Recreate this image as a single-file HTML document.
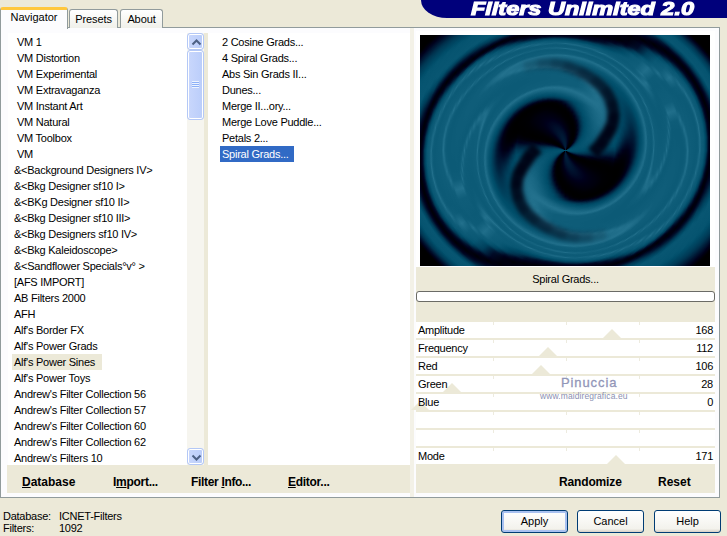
<!DOCTYPE html>
<html><head><meta charset="utf-8"><title>Filters Unlimited 2.0</title>
<style>
*{box-sizing:border-box;margin:0;padding:0}
html,body{width:727px;height:536px;overflow:hidden;background:#ece9d8}
body{position:relative;font-family:"Liberation Sans",sans-serif;font-size:11px;color:#000}
.abs{position:absolute}
#panel{left:0;top:27px;width:720px;height:471px;background:#fcfcfe;border:1px solid #919b9c;border-top-color:#919b9c}
.tab{top:9px;height:19px;border:1px solid #919b9c;border-bottom:none;border-radius:3px 3px 0 0;background:linear-gradient(#fff,#f0f0ea);font-size:11px;text-align:center;line-height:18px;letter-spacing:-0.1px}
#tabnav{left:0;top:7px;width:68px;height:22px;background:#fcfcfe;border:1px solid #919b9c;border-bottom:none;border-top:3px solid #ffc73c;border-radius:3px 3px 0 0;line-height:14px;font-size:11px;text-align:center}
.list{background:#fff;top:33px;height:432px}
.it{position:absolute;height:16px;line-height:16px;white-space:pre;font-size:11px;letter-spacing:-0.25px}
.st{font-size:11px;line-height:13px;letter-spacing:-0.25px;white-space:pre}
.bold{font-weight:bold;font-size:12px}
#banner{left:421px;top:0;width:306px;height:18px;background:#00007b;border-bottom-left-radius:26px 18px}
#title{left:471px;top:-2px;height:22px;color:#fff;font:italic bold 19px/22px "Liberation Sans",sans-serif;white-space:pre;-webkit-text-stroke:1.1px #fff;transform-origin:0 0;transform:scaleX(1.235)}
#prev{left:420px;top:35px;width:290px;height:231px;background:#000;overflow:hidden}
#prev i{position:absolute;left:145px;top:115.5px;border-radius:50%;display:block}
.row{left:416px;width:299px;height:16px;background:linear-gradient(#edebdf,#edebdf) 77px 0/1px 3px no-repeat,linear-gradient(#edebdf,#edebdf) 150px 0/1px 3px no-repeat,linear-gradient(#edebdf,#edebdf) 223px 0/1px 3px no-repeat,#fff}
.row span{position:absolute;top:0;line-height:16px;font-size:11px;letter-spacing:-0.25px}
.row .l{left:2px}.row .v{right:2px}
.tri{position:absolute;width:0;height:0;border-left:9px solid transparent;border-right:9px solid transparent;border-bottom:9px solid #ece9d8;bottom:0}
.btn{top:510px;width:67px;height:23px;border:1px solid #003c74;border-radius:3px;background:linear-gradient(#fff,#f3f2ec 85%,#d6d0c5);text-align:center;line-height:21px;font-size:11px}
.sb{width:17px;height:17px;border:1px solid #b4c8f6;border-radius:3px;background:linear-gradient(90deg,#c9d7fc,#bacdfa);box-shadow:inset 0 0 0 1px #fff}
</style></head><body>
<div class="abs" id="panel"></div>
<div class="abs tab" style="left:69px;width:49px">Presets</div>
<div class="abs tab" style="left:120px;width:43px">About</div>
<div class="abs" id="tabnav">Navigator</div>
<div class="abs" id="banner"></div>
<div class="abs" id="title">Filters Unlimited 2.0</div>

<div class="abs list" id="l1" style="left:8px;width:196px">
<div class="it" style="left:9px;top:1px">VM 1</div>
<div class="it" style="left:9px;top:17px">VM Distortion</div>
<div class="it" style="left:9px;top:33px">VM Experimental</div>
<div class="it" style="left:9px;top:49px">VM Extravaganza</div>
<div class="it" style="left:9px;top:65px">VM Instant Art</div>
<div class="it" style="left:9px;top:81px">VM Natural</div>
<div class="it" style="left:9px;top:97px">VM Toolbox</div>
<div class="it" style="left:9px;top:113px">VM</div>
<div class="it" style="left:6px;top:129px">&amp;&lt;Background Designers IV&gt;</div>
<div class="it" style="left:6px;top:145px">&amp;&lt;Bkg Designer sf10 I&gt;</div>
<div class="it" style="left:6px;top:161px">&amp;&lt;BKg Designer sf10 II&gt;</div>
<div class="it" style="left:6px;top:177px">&amp;&lt;Bkg Designer sf10 III&gt;</div>
<div class="it" style="left:6px;top:193px">&amp;&lt;Bkg Designers sf10 IV&gt;</div>
<div class="it" style="left:6px;top:209px">&amp;&lt;Bkg Kaleidoscope&gt;</div>
<div class="it" style="left:6px;top:225px">&amp;&lt;Sandflower Specials°v° &gt;</div>
<div class="it" style="left:6px;top:241px">[AFS IMPORT]</div>
<div class="it" style="left:6px;top:257px">AB Filters 2000</div>
<div class="it" style="left:6px;top:273px">AFH</div>
<div class="it" style="left:6px;top:289px">Alf&#x27;s Border FX</div>
<div class="it" style="left:6px;top:305px">Alf&#x27;s Power Grads</div>
<div class="abs" style="left:4px;top:321px;width:90px;height:16px;background:#ece9d8"></div>
<div class="it" style="left:6px;top:321px">Alf&#x27;s Power Sines</div>
<div class="it" style="left:6px;top:337px">Alf&#x27;s Power Toys</div>
<div class="it" style="left:6px;top:353px">Andrew&#x27;s Filter Collection 56</div>
<div class="it" style="left:6px;top:369px">Andrew&#x27;s Filter Collection 57</div>
<div class="it" style="left:6px;top:385px">Andrew&#x27;s Filter Collection 60</div>
<div class="it" style="left:6px;top:401px">Andrew&#x27;s Filter Collection 62</div>
<div class="it" style="left:6px;top:417px">Andrew&#x27;s Filters 10</div>
<div class="abs" style="left:179px;top:0;width:17px;height:432px;background:#f6f5ef"></div>
<div class="abs sb" style="left:179px;top:0"><svg width="17" height="17" viewBox="0 0 17 17"><path d="M4.5 10.5L8.5 6.5L12.5 10.5" fill="none" stroke="#4d6185" stroke-width="2"/></svg></div>
<div class="abs sb" style="left:179px;top:17px;height:70px"></div>
<div class="abs" style="left:184px;top:48px;width:7px;height:7px;background:repeating-linear-gradient(#eef4fe 0 1px,#8cb0f8 1px 2px)"></div>
<div class="abs sb" style="left:179px;top:415px"><svg width="17" height="17" viewBox="0 0 17 17"><path d="M4.5 6.5L8.5 10.5L12.5 6.5" fill="none" stroke="#4d6185" stroke-width="2"/></svg></div>
</div>
<div class="abs" style="left:204px;top:33px;width:4px;height:432px;background:#ece9d8"></div>
<div class="abs list" id="l2" style="left:208px;width:202px">
<div class="it" style="left:14px;top:1px">2 Cosine Grads...</div>
<div class="it" style="left:14px;top:17px">4 Spiral Grads...</div>
<div class="it" style="left:14px;top:33px">Abs Sin Grads II...</div>
<div class="it" style="left:14px;top:49px">Dunes...</div>
<div class="it" style="left:14px;top:65px">Merge II...ory...</div>
<div class="it" style="left:14px;top:81px">Merge Love Puddle...</div>
<div class="it" style="left:14px;top:97px">Petals 2...</div>
<div class="abs" style="left:12px;top:113px;width:74px;height:16px;background:#316ac5"></div>
<div class="it" style="left:14px;top:113px;color:#fff">Spiral Grads...</div>
</div>
<div class="abs" style="left:410px;top:28px;width:4px;height:469px;background:#f3f1e7"></div>

<!-- bottom button row -->
<div class="abs" style="left:7px;top:465px;width:403px;height:28px;background:#ece9d8"></div>
<div class="abs bold" style="left:22px;top:475px"><u>D</u>atabase</div>
<div class="abs bold" style="left:113px;top:475px;letter-spacing:-0.27px">I<u>m</u>port...</div>
<div class="abs bold" style="left:191px;top:475px;letter-spacing:-0.33px">Filter <u>I</u>nfo...</div>
<div class="abs bold" style="left:288px;top:475px;letter-spacing:-0.28px"><u>E</u>ditor...</div>

<!-- preview -->
<div class="abs" style="left:416px;top:31px;width:299px;height:236px;background:#fff"></div>
<div class="abs" id="prev">
<i style="width:373px;height:373px;margin:-186.5px;background:#000000"></i>
<i style="width:371px;height:371px;margin:-185.5px;background:#000000"></i>
<i style="width:369px;height:369px;margin:-184.5px;background:#000000"></i>
<i style="width:367px;height:367px;margin:-183.5px;background:#000000"></i>
<i style="width:365px;height:365px;margin:-182.5px;background:#000000"></i>
<i style="width:363px;height:363px;margin:-181.5px;background:#000000"></i>
<i style="width:361px;height:361px;margin:-180.5px;background:repeating-conic-gradient(from 90deg,#000003 0,#000005,#000003,#000000,#000000,#000000,#000000,#000000,#000000,#000000,#000000,#000000,#000000,#000000,#000000,#000000,#000000,#000000,#000000,#000000,#000000,#000000,#000000,#000000,#000000,#000000,#000000,#000000,#000000,#000000,#000000,#000000,#000000,#000000,#000000,#000000,#000003 180deg)"></i>
<i style="width:359px;height:359px;margin:-179.5px;background:repeating-conic-gradient(from 90deg,#00000d 0,#00000e,#00000d,#000009,#000001,#000000,#000000,#000000,#000000,#000000,#000000,#000000,#000000,#000000,#000000,#000000,#000000,#000000,#000000,#000000,#000000,#000000,#000000,#000000,#000000,#000000,#000000,#000000,#000000,#000000,#000000,#000000,#000000,#000000,#000001,#000009,#00000d 180deg)"></i>
<i style="width:357px;height:357px;margin:-178.5px;background:repeating-conic-gradient(from 90deg,#000017 0,#000018,#000017,#000012,#00000b,#000001,#000000,#000000,#000000,#000000,#000000,#000000,#000000,#000000,#000000,#000000,#000000,#000000,#000000,#000000,#000000,#000000,#000000,#000000,#000000,#000000,#000000,#000000,#000000,#000000,#000000,#000000,#000000,#000001,#00000b,#000012,#000017 180deg)"></i>
<i style="width:355px;height:355px;margin:-177.5px;background:repeating-conic-gradient(from 90deg,#000420 0,#000622,#000420,#00001c,#000015,#00000b,#000000,#000000,#000000,#000000,#000000,#000000,#000000,#000000,#000000,#000000,#000000,#000000,#000000,#000000,#000000,#000000,#000000,#000000,#000000,#000000,#000000,#000000,#000000,#000000,#000000,#000000,#000000,#00000b,#000015,#00001c,#000420 180deg)"></i>
<i style="width:353px;height:353px;margin:-176.5px;background:repeating-conic-gradient(from 90deg,#000e2a 0,#000f2b,#000e2a,#000925,#00021e,#000015,#000009,#000000,#000000,#000000,#000000,#000000,#000000,#000000,#000000,#000000,#000000,#000000,#000000,#000000,#000000,#000000,#000000,#000000,#000000,#000000,#000000,#000000,#000000,#000000,#000000,#000000,#000009,#000015,#00021e,#000925,#000e2a 180deg)"></i>
<i style="width:351px;height:351px;margin:-175.5px;background:repeating-conic-gradient(from 90deg,#001733 0,#001935,#001733,#00132f,#000c28,#00021e,#000012,#000004,#000000,#000000,#000000,#000000,#000000,#000000,#000000,#000000,#000000,#000000,#000000,#000000,#000000,#000000,#000000,#000000,#000000,#000000,#000000,#000000,#000000,#000000,#000000,#000004,#000012,#00021e,#000c28,#00132f,#001733 180deg)"></i>
<i style="width:349px;height:349px;margin:-174.5px;background:repeating-conic-gradient(from 90deg,#00213d 0,#00223e,#00213d,#001c38,#001531,#000c28,#00001c,#00000e,#000000,#000000,#000000,#000000,#000000,#000000,#000000,#000000,#000000,#000000,#000000,#000000,#000000,#000000,#000000,#000000,#000000,#000000,#000000,#000000,#000000,#000000,#000000,#00000e,#00001c,#000c28,#001531,#001c38,#00213d 180deg)"></i>
<i style="width:347px;height:347px;margin:-173.5px;background:repeating-conic-gradient(from 90deg,#002a46 0,#002b47,#002945,#002541,#001d39,#00132f,#000723,#000015,#000006,#000000,#000000,#000000,#000000,#000000,#000000,#000000,#000000,#000000,#000000,#000000,#000000,#000000,#000000,#000000,#000000,#000000,#000000,#000000,#000000,#000000,#00000a,#000019,#000b27,#001632,#00203c,#002642,#002a46 180deg)"></i>
<i style="width:345px;height:345px;margin:-172.5px;background:repeating-conic-gradient(from 90deg,#003450 0,#003450,#00324e,#002d49,#002541,#001b37,#000f2b,#00001c,#00000d,#000000,#000000,#000000,#000000,#000000,#000000,#000000,#000000,#000000,#000000,#000000,#000000,#000000,#000000,#000000,#000000,#000000,#000000,#000000,#000000,#000005,#000016,#000925,#001632,#00213d,#002a46,#00304c,#003450 180deg)"></i>
<i style="width:343px;height:343px;margin:-171.5px;background:repeating-conic-gradient(from 90deg,#003b57 0,#003b57,#003a56,#003551,#002d49,#00233f,#001632,#000824,#000014,#000003,#000000,#000000,#000000,#000000,#000000,#000000,#000000,#000000,#000000,#000000,#000000,#000000,#000000,#000000,#000000,#000000,#000000,#000000,#000000,#000011,#000521,#001430,#00213d,#002c48,#003450,#003955,#003b57 180deg)"></i>
<i style="width:341px;height:341px;margin:-170.5px;background:repeating-conic-gradient(from 90deg,#00405c 0,#00405c,#003e5a,#003b57,#003551,#002a46,#001d39,#000f2b,#00001b,#00000a,#000000,#000000,#000000,#000000,#000000,#000000,#000000,#000000,#000000,#000000,#000000,#000000,#000000,#000000,#000000,#000000,#000000,#000000,#00000c,#00011d,#00102c,#001f3b,#002b47,#003652,#003c58,#003f5b,#00405c 180deg)"></i>
<i style="width:339px;height:339px;margin:-169.5px;background:repeating-conic-gradient(from 90deg,#004561 0,#004561,#00435f,#003f5b,#003b57,#00324e,#002440,#001632,#000622,#000011,#000000,#000000,#000000,#000000,#000000,#000000,#000000,#000000,#000000,#000000,#000000,#000000,#000000,#000000,#000000,#000000,#000000,#000007,#000017,#000c28,#001c38,#002a46,#003652,#003d59,#00415d,#004460,#004561 180deg)"></i>
<i style="width:337px;height:337px;margin:-168.5px;background:repeating-conic-gradient(from 90deg,#004a66 0,#004965,#004763,#004460,#003f5b,#003955,#002c48,#001d39,#000d29,#000018,#000007,#000000,#000000,#000000,#000000,#000000,#000000,#000000,#000000,#000000,#000000,#000000,#000000,#000000,#000000,#000000,#000001,#000012,#000723,#001733,#002743,#003551,#003d59,#00425e,#004662,#004965,#004a66 180deg)"></i>
<i style="width:335px;height:335px;margin:-167.5px;background:repeating-conic-gradient(from 90deg,#014f6b 0,#004e6a,#004c68,#004864,#00435f,#003d59,#00334f,#00233f,#00132f,#00031f,#00000e,#000000,#000000,#000000,#000000,#000000,#000000,#000000,#000000,#000000,#000000,#000000,#000000,#000000,#000000,#000000,#00000d,#00021e,#00122e,#00223e,#00324e,#003c58,#00425e,#004864,#004b67,#004e6a,#014f6b 180deg)"></i>
<i style="width:333px;height:333px;margin:-166.5px;background:repeating-conic-gradient(from 90deg,#05536f 0,#04526e,#02506c,#004c68,#004763,#00405c,#003955,#002a46,#001a36,#000925,#000015,#000004,#000000,#000000,#000000,#000000,#000000,#000000,#000000,#000000,#000000,#000000,#000000,#000000,#000000,#000008,#000018,#000d29,#001d39,#002d49,#003b57,#00425e,#004864,#004d69,#03516d,#05536f,#05536f 180deg)"></i>
<i style="width:331px;height:331px;margin:-165.5px;background:repeating-conic-gradient(from 90deg,#065470 0,#065470,#065470,#02506c,#004b67,#004460,#003d59,#00314d,#00213d,#00102c,#00001b,#00000b,#000000,#000000,#000000,#000000,#000000,#000000,#000000,#000000,#000000,#000000,#000000,#000000,#000003,#000013,#000723,#001834,#002945,#003854,#00405c,#004763,#004d69,#04526e,#065470,#065470,#065470 180deg)"></i>
<i style="width:329px;height:329px;margin:-164.5px;background:repeating-conic-gradient(from 90deg,#065470 0,#065470,#065470,#065470,#014f6b,#004864,#00405c,#003753,#002743,#001632,#000622,#000012,#000003,#000000,#000000,#000000,#000000,#000000,#000000,#000000,#000000,#000000,#000000,#000000,#00000e,#00021e,#00122e,#00233f,#003450,#003e5a,#004662,#004d69,#05536f,#065470,#065470,#065470,#065470 180deg)"></i>
<i style="width:327px;height:327px;margin:-163.5px;background:repeating-conic-gradient(from 90deg,#075571 0,#075571,#065470,#065470,#04526e,#004c68,#004460,#003b57,#002e4a,#001d39,#000d29,#000019,#00000a,#000000,#000000,#000000,#000000,#000000,#000000,#000000,#000000,#000000,#000000,#00000a,#000019,#000d29,#001e3a,#002e4a,#003c58,#004460,#004c68,#05536f,#065470,#065470,#075571,#075571,#075571 180deg)"></i>
<i style="width:325px;height:325px;margin:-162.5px;background:repeating-conic-gradient(from 90deg,#075571 0,#075571,#075571,#065470,#065470,#014f6b,#004763,#003f5b,#003450,#00233f,#00132f,#00031f,#000011,#000004,#000000,#000000,#000000,#000000,#000000,#000000,#000000,#000000,#000008,#000015,#000824,#001834,#002844,#003955,#00425e,#004a66,#03516d,#065470,#065470,#075571,#075571,#075571,#075571 180deg)"></i>
<i style="width:323px;height:323px;margin:-161.5px;background:repeating-conic-gradient(from 90deg,#075571 0,#075571,#075571,#075571,#065470,#05536f,#004b67,#00425e,#003955,#002a46,#001935,#000a26,#000018,#00000b,#000001,#000000,#000000,#000000,#000000,#000000,#000000,#000007,#000012,#000420,#00132f,#00233f,#00334f,#003f5b,#004763,#02506c,#065470,#065470,#075571,#075571,#075571,#075571,#075571 180deg)"></i>
<i style="width:321px;height:321px;margin:-160.5px;background:repeating-conic-gradient(from 90deg,#085672 0,#085672,#075571,#075571,#065470,#065470,#004e6a,#004662,#003d59,#00304c,#00203c,#00112d,#00031f,#000013,#000009,#000001,#000000,#000000,#000000,#000001,#000008,#000011,#00011d,#000f2b,#001e3a,#002e4a,#003c58,#004460,#004d69,#065470,#065470,#075571,#075571,#085672,#085672,#085672,#085672 180deg)"></i>
<i style="width:319px;height:319px;margin:-159.5px;background:repeating-conic-gradient(from 90deg,#085672 0,#085672,#085672,#075571,#075571,#065470,#04526e,#004965,#00405c,#003652,#002642,#001733,#000a26,#00001a,#000010,#000009,#000005,#000004,#000006,#00000a,#000011,#00001b,#000b27,#001935,#002844,#003955,#00415d,#004a66,#05536f,#065470,#075571,#075571,#085672,#085672,#085672,#085672,#085672 180deg)"></i>
<i style="width:317px;height:317px;margin:-158.5px;background:repeating-conic-gradient(from 90deg,#085672 0,#085672,#085672,#075571,#075571,#065470,#065470,#004c68,#00435f,#003b57,#002d49,#001e3a,#00102c,#000521,#000018,#000011,#00000d,#00000d,#00000f,#000014,#00001b,#000925,#001632,#002440,#00334f,#003e5a,#004763,#02506c,#065470,#075571,#075571,#085672,#085672,#085672,#085672,#075571,#085672 180deg)"></i>
<i style="width:315px;height:315px;margin:-157.5px;background:repeating-conic-gradient(from 90deg,#02506c 0,#075571,#085672,#085672,#075571,#075571,#065470,#02506c,#004763,#003e5a,#00334f,#002440,#001733,#000c28,#00031f,#000019,#000016,#000015,#000018,#00011d,#000925,#00132f,#00203c,#002e4a,#003b57,#004460,#004d69,#065470,#065470,#075571,#085672,#085672,#085672,#03516d,#004e6a,#004e6a,#02506c 180deg)"></i>
<i style="width:313px;height:313px;margin:-156.5px;background:repeating-conic-gradient(from 90deg,#004965 0,#004e6a,#075571,#085672,#085672,#075571,#065470,#05536f,#004a66,#00415d,#003955,#002b47,#001e3a,#00132f,#000b27,#000521,#00021e,#00021e,#000521,#000a26,#00132f,#001d39,#002a46,#003955,#00415d,#004a66,#05536f,#065470,#075571,#075571,#085672,#085672,#004e6a,#004965,#004763,#004763,#004965 180deg)"></i>
<i style="width:311px;height:311px;margin:-155.5px;background:repeating-conic-gradient(from 90deg,#00425e 0,#004864,#014f6b,#085672,#085672,#075571,#065470,#065470,#004d69,#004460,#003c58,#00314d,#002541,#001a36,#00122e,#000d29,#000a26,#000b27,#000e2a,#001430,#001c38,#002743,#003450,#003e5a,#004763,#014f6b,#065470,#075571,#075571,#085672,#085672,#004d69,#004662,#00415d,#003f5b,#003f5b,#00425e 180deg)"></i>
<i style="width:309px;height:309px;margin:-154.5px;background:repeating-conic-gradient(from 90deg,#003955 0,#00415d,#004965,#05536f,#085672,#075571,#075571,#065470,#02506c,#004864,#003f5b,#003854,#002b47,#00213d,#001935,#001430,#00122e,#00132f,#001733,#001d39,#002642,#00314d,#003c58,#004460,#004c68,#065470,#065470,#075571,#085672,#085672,#004e6a,#004561,#003e5a,#003551,#00324e,#00334f,#003955 180deg)"></i>
<i style="width:307px;height:307px;margin:-153.5px;background:repeating-conic-gradient(from 90deg,#002c48 0,#003854,#00435f,#004d69,#085672,#085672,#075571,#065470,#065470,#004b67,#00435f,#003b57,#00324e,#002844,#00213d,#001c38,#001a36,#001c38,#00203c,#002642,#00304c,#003a56,#00415d,#004965,#04526e,#065470,#075571,#085672,#085672,#02506c,#004561,#003b57,#002e4a,#002642,#00233f,#002541,#002c48 180deg)"></i>
<i style="width:305px;height:305px;margin:-152.5px;background:repeating-conic-gradient(from 90deg,#001f3b 0,#002c48,#003d59,#004864,#065470,#085672,#075571,#075571,#065470,#004e6a,#004662,#003f5b,#003955,#002f4b,#002844,#002440,#00233f,#002440,#002945,#00304c,#003955,#003f5b,#004763,#014f6b,#065470,#075571,#075571,#085672,#05536f,#004763,#003b57,#002b47,#001e3a,#001733,#001430,#001733,#001f3b 180deg)"></i>
<i style="width:303px;height:303px;margin:-151.5px;background:repeating-conic-gradient(from 90deg,#00122e 0,#001f3b,#00314d,#00425e,#004e6a,#085672,#075571,#075571,#065470,#03516d,#004965,#00425e,#003c58,#003652,#00304c,#002c48,#002b47,#002d49,#00324e,#003955,#003e5a,#004561,#004c68,#065470,#065470,#075571,#085672,#085672,#004a66,#003e5a,#002b47,#001a36,#000f2b,#000925,#000824,#000a26,#00122e 180deg)"></i>
<i style="width:301px;height:301px;margin:-150.5px;background:repeating-conic-gradient(from 90deg,#000824 0,#00132f,#002642,#003c58,#004965,#085672,#085672,#075571,#065470,#065470,#004d69,#004662,#00405c,#003b57,#003753,#00334f,#00334f,#003551,#003a56,#003e5a,#00435f,#004a66,#03516d,#065470,#075571,#075571,#085672,#004e6a,#00415d,#002d49,#001a36,#000b27,#000420,#00001c,#00001b,#00021e,#000824 180deg)"></i>
<i style="width:299px;height:299px;margin:-149.5px;background:repeating-conic-gradient(from 90deg,#00001c 0,#000925,#001a36,#00314d,#004460,#04526e,#085672,#075571,#075571,#065470,#02506c,#004965,#00435f,#003f5b,#003c58,#003a56,#003a56,#003b57,#003e5a,#00435f,#004864,#014f6b,#065470,#065470,#075571,#085672,#05536f,#004561,#00334f,#001c38,#000a26,#00001c,#000016,#000012,#000012,#000015,#00001c 180deg)"></i>
<i style="width:297px;height:297px;margin:-148.5px;background:repeating-conic-gradient(from 90deg,#000014 0,#00011d,#000f2b,#002642,#003f5b,#004d69,#085672,#085672,#075571,#065470,#05536f,#004c68,#004763,#00425e,#00405c,#003e5a,#003e5a,#00405c,#00435f,#004864,#004d69,#065470,#065470,#075571,#085672,#085672,#004a66,#003b57,#00223e,#000b27,#00001b,#000012,#00000c,#000009,#000009,#00000d,#000014 180deg)"></i>
<i style="width:295px;height:295px;margin:-147.5px;background:repeating-conic-gradient(from 90deg,#00000c 0,#000016,#000723,#001b37,#003652,#004864,#085672,#085672,#075571,#065470,#065470,#02506c,#004a66,#004662,#00435f,#00425e,#00435f,#004460,#004864,#004d69,#05536f,#065470,#075571,#075571,#085672,#02506c,#00415d,#002945,#00102c,#00011d,#000011,#000008,#000006,#000009,#000008,#000005,#00000c 180deg)"></i>
<i style="width:293px;height:293px;margin:-146.5px;background:repeating-conic-gradient(from 90deg,#000005 0,#00000f,#00001c,#00112d,#002b47,#00435f,#03516d,#085672,#075571,#075571,#065470,#05536f,#004e6a,#004a66,#004763,#004662,#004763,#004965,#004d69,#04526e,#065470,#065470,#075571,#085672,#075571,#004763,#00334f,#001834,#000420,#000012,#000007,#00000b,#000010,#000012,#000011,#00000c,#000005 180deg)"></i>
<i style="width:291px;height:291px;margin:-145.5px;background:repeating-conic-gradient(from 90deg,#00000c 0,#000008,#000015,#000824,#00213d,#003e5a,#004c68,#085672,#085672,#075571,#065470,#065470,#03516d,#004e6a,#004b67,#004b67,#004b67,#004e6a,#03516d,#065470,#065470,#075571,#085672,#085672,#004d69,#003e5a,#00213d,#000824,#000015,#000008,#00000c,#000014,#000019,#00001b,#000019,#000014,#00000c 180deg)"></i>
<i style="width:289px;height:289px;margin:-144.5px;background:repeating-conic-gradient(from 90deg,#000018 0,#00000d,#000009,#000019,#00102c,#002c48,#004460,#05536f,#085672,#075571,#075571,#065470,#065470,#03516d,#014f6b,#004e6a,#004e6a,#03516d,#065470,#065470,#075571,#075571,#085672,#085672,#004763,#00334f,#001632,#00011d,#00000d,#00000a,#000015,#00021e,#000723,#000925,#000824,#00031f,#000018 180deg)"></i>
<i style="width:287px;height:287px;margin:-143.5px;background:repeating-conic-gradient(from 90deg,#000723 0,#000018,#00000b,#00000d,#00031f,#001b37,#003955,#004b67,#085672,#085672,#075571,#065470,#065470,#065470,#04526e,#03516d,#04526e,#065470,#065470,#065470,#075571,#075571,#085672,#03516d,#00425e,#002844,#000b27,#000015,#000005,#000013,#00031f,#000b27,#001a36,#00213d,#001e3a,#00132f,#000723 180deg)"></i>
<i style="width:285px;height:285px;margin:-142.5px;background:repeating-conic-gradient(from 90deg,#001d39 0,#000824,#000016,#000007,#000013,#000a26,#002844,#00425e,#04526e,#085672,#075571,#075571,#065470,#065470,#065470,#065470,#065470,#065470,#065470,#065470,#075571,#085672,#085672,#004d69,#003d59,#001e3a,#000420,#00000d,#00000c,#00001b,#000b27,#002440,#003450,#003c58,#003a56,#00304c,#001d39 180deg)"></i>
<i style="width:283px;height:283px;margin:-141.5px;background:repeating-conic-gradient(from 90deg,#003a56 0,#001f3b,#000622,#000012,#000008,#00001b,#001733,#003753,#004a66,#085672,#085672,#075571,#075571,#065470,#065470,#065470,#065470,#065470,#065470,#075571,#075571,#085672,#085672,#004864,#00334f,#00132f,#000019,#000006,#000014,#000824,#00223e,#003c58,#004460,#004763,#004763,#00435f,#003a56 180deg)"></i>
<i style="width:281px;height:281px;margin:-140.5px;background:repeating-conic-gradient(from 90deg,#004763 0,#003c58,#001a36,#00021e,#00000c,#000010,#000824,#002642,#00425e,#03516d,#085672,#075571,#075571,#075571,#065470,#065470,#065470,#065470,#075571,#075571,#075571,#085672,#04526e,#00435f,#002945,#000a26,#000012,#00000a,#00001c,#001632,#003955,#004662,#004e6a,#03516d,#04526e,#004e6a,#004763 180deg)"></i>
<i style="width:279px;height:279px;margin:-139.5px;background:repeating-conic-gradient(from 90deg,#04526e 0,#004864,#003854,#000f2b,#000017,#000005,#000019,#001531,#003652,#004965,#085672,#085672,#075571,#075571,#075571,#065470,#065470,#065470,#075571,#075571,#085672,#085672,#004e6a,#003f5b,#00203c,#000420,#00000b,#000011,#000723,#002b47,#004561,#02506c,#095773,#0a5874,#0a5874,#0a5874,#04526e 180deg)"></i>
<i style="width:277px;height:277px;margin:-138.5px;background:repeating-conic-gradient(from 90deg,#0b5975 0,#065470,#004763,#002d49,#000723,#00000f,#00000e,#000723,#002642,#00415d,#02506c,#085672,#085672,#075571,#075571,#075571,#075571,#075571,#075571,#075571,#085672,#085672,#004965,#003753,#001733,#00001a,#000005,#000018,#001430,#003f5b,#004d69,#0a5874,#0b5975,#0c5a76,#0c5a76,#0c5a76,#0b5975 180deg)"></i>
<i style="width:275px;height:275px;margin:-137.5px;background:repeating-conic-gradient(from 90deg,#0d5b77 0,#0b5975,#04526e,#00425e,#001a36,#00001a,#000005,#000019,#001632,#003753,#004965,#085672,#085672,#075571,#075571,#075571,#075571,#075571,#075571,#085672,#085672,#05536f,#004561,#002d49,#000d29,#000013,#00000b,#000420,#002945,#004763,#085672,#0b5975,#0d5b77,#0e5c78,#0e5c78,#0e5c78,#0d5b77 180deg)"></i>
<i style="width:273px;height:273px;margin:-136.5px;background:repeating-conic-gradient(from 90deg,#0f5d79 0,#0d5b77,#0a5874,#004d69,#003652,#000824,#00000f,#000010,#000925,#002844,#00425e,#02506c,#085672,#085672,#075571,#075571,#075571,#075571,#075571,#085672,#085672,#004e6a,#00405c,#00233f,#000622,#00000c,#000012,#000b27,#003e5a,#014f6b,#0b5975,#0d5b77,#0f5d79,#12607c,#15637f,#115f7b,#0f5d79 180deg)"></i>
<i style="width:271px;height:271px;margin:-135.5px;background:repeating-conic-gradient(from 90deg,#186682 0,#0f5d79,#0c5a76,#095773,#004561,#001d39,#000019,#000006,#00001c,#001a36,#003955,#004a66,#085672,#085672,#085672,#075571,#075571,#075571,#085672,#085672,#075571,#004965,#003955,#001a36,#00001b,#000005,#000019,#001e3a,#004561,#0a5874,#0c5a76,#0f5d79,#186682,#216f8b,#23718d,#216f8b,#186682 180deg)"></i>
<i style="width:269px;height:269px;margin:-134.5px;background:repeating-conic-gradient(from 90deg,#1f6d89 0,#1a6884,#0e5c78,#0b5975,#02506c,#003854,#000723,#00000d,#000012,#000c28,#002c48,#00435f,#02506c,#085672,#085672,#085672,#085672,#085672,#085672,#085672,#03516d,#004561,#002f4b,#00102c,#000015,#00000a,#000420,#00314d,#004d69,#0b5975,#0e5c78,#186682,#206e8a,#176581,#13617d,#166480,#1f6d89 180deg)"></i>
<i style="width:267px;height:267px;margin:-133.5px;background:repeating-conic-gradient(from 90deg,#0f5d79 0,#1d6b87,#176581,#0d5b77,#0a5874,#004662,#001935,#000016,#000009,#00031f,#001e3a,#003c58,#004965,#065470,#085672,#085672,#085672,#085672,#085672,#085672,#004c68,#00405c,#002642,#000824,#00000f,#000011,#000b27,#00405c,#075571,#0d5b77,#115f7b,#216f8b,#12607c,#0e5c78,#0e5c78,#0e5c78,#0f5d79 180deg)"></i>
<i style="width:265px;height:265px;margin:-132.5px;background:repeating-conic-gradient(from 90deg,#0d5b77 0,#0f5d79,#206e8a,#0f5d79,#0c5a76,#02506c,#00334f,#000420,#000009,#000016,#00112d,#002f4b,#00435f,#004e6a,#085672,#085672,#085672,#085672,#085672,#04526e,#004864,#003a56,#001d39,#00021e,#000009,#000017,#001c38,#004763,#0a5874,#0e5c78,#1e6c88,#14627e,#0e5c78,#0c5a76,#0c5a76,#0c5a76,#0d5b77 180deg)"></i>
<i style="width:263px;height:263px;margin:-131.5px;background:repeating-conic-gradient(from 90deg,#0c5a76 0,#0d5b77,#105e7a,#1f6d89,#0e5c78,#0a5874,#004460,#00112d,#000013,#00000d,#000622,#00223e,#003d59,#004864,#03516d,#085672,#085672,#085672,#065470,#004d69,#004460,#00314d,#001430,#000019,#000006,#00011d,#002e4a,#004e6a,#0c5a76,#105e7a,#1c6a86,#0e5c78,#0c5a76,#0c5a76,#0c5a76,#0c5a76,#0c5a76 180deg)"></i>
<i style="width:261px;height:261px;margin:-130.5px;background:repeating-conic-gradient(from 90deg,#0c5a76 0,#0c5a76,#0d5b77,#166480,#14627e,#0c5a76,#02506c,#00314d,#00021e,#000007,#000017,#00122e,#002d49,#00415d,#004a66,#02506c,#05536f,#05536f,#02506c,#004965,#00405c,#002a46,#000e2a,#000015,#00000a,#000521,#003854,#05536f,#0d5b77,#186682,#13617d,#0d5b77,#0c5a76,#0c5a76,#0d5b77,#0d5b77,#0c5a76 180deg)"></i>
<i style="width:259px;height:259px;margin:-129.5px;background:repeating-conic-gradient(from 90deg,#0d5b77 0,#0c5a76,#0c5a76,#0e5c78,#1e6c88,#0f5d79,#0b5975,#004763,#001935,#000016,#00000a,#00021e,#001a36,#00324e,#00425e,#004965,#004c68,#004d69,#004b67,#004561,#003b57,#002541,#000a26,#000013,#00000c,#000723,#003c58,#065470,#0d5b77,#1c6a86,#0f5d79,#0c5a76,#0c5a76,#0d5b77,#0d5b77,#0d5b77,#0d5b77 180deg)"></i>
<i style="width:257px;height:257px;margin:-128.5px;background:repeating-conic-gradient(from 90deg,#0d5b77 0,#0d5b77,#0c5a76,#0c5a76,#0f5d79,#1f6d89,#0d5b77,#075571,#003e5a,#000824,#00000d,#000011,#000824,#00203c,#003551,#00415d,#004662,#004763,#004662,#00415d,#003450,#001f3b,#000824,#000011,#00000e,#000824,#003e5a,#085672,#0d5b77,#206e8a,#0f5d79,#0c5a76,#0c5a76,#0d5b77,#0d5b77,#0e5c78,#0d5b77 180deg)"></i>
<i style="width:255px;height:255px;margin:-127.5px;background:repeating-conic-gradient(from 90deg,#0e5c78 0,#0e5c78,#0d5b77,#0c5a76,#0c5a76,#13617d,#13617d,#0c5a76,#004c68,#002642,#00001b,#000005,#000017,#000d29,#00233f,#003450,#003f5b,#00415d,#00405c,#003b57,#002d49,#001a36,#000521,#00000e,#00000f,#000a26,#00405c,#095773,#0e5c78,#23718d,#0e5c78,#0c5a76,#0d5b77,#0d5b77,#0e5c78,#0e5c78,#0e5c78 180deg)"></i>
<i style="width:253px;height:253px;margin:-126.5px;background:repeating-conic-gradient(from 90deg,#0e5c78 0,#0e5c78,#0e5c78,#0d5b77,#0c5a76,#0d5b77,#1e6c88,#0e5c78,#0a5874,#00435f,#000f2b,#000013,#00000a,#00001c,#00122e,#002440,#00314d,#003854,#003854,#00324e,#002642,#00132f,#00021e,#00000c,#000011,#000b27,#00415d,#0a5874,#0e5c78,#216f8b,#0e5c78,#0c5a76,#0d5b77,#0e5c78,#0e5c78,#0e5c78,#0e5c78 180deg)"></i>
<i style="width:251px;height:251px;margin:-125.5px;background:repeating-conic-gradient(from 90deg,#0f5d79 0,#0f5d79,#0e5c78,#0e5c78,#0d5b77,#0c5a76,#0f5d79,#1c6a86,#0d5b77,#03516d,#00334f,#000420,#00000c,#000010,#000420,#001430,#00223e,#002b47,#002d49,#002844,#001e3a,#000d29,#00001b,#00000a,#000013,#000e2a,#00425e,#0a5874,#0e5c78,#1f6d89,#0d5b77,#0c5a76,#0d5b77,#0e5c78,#0f5d79,#0f5d79,#0f5d79 180deg)"></i>
<i style="width:249px;height:249px;margin:-124.5px;background:repeating-conic-gradient(from 90deg,#0f5d79 0,#0f5d79,#0f5d79,#0e5c78,#0e5c78,#0d5b77,#0c5a76,#166480,#0f5d79,#0b5975,#004864,#001c38,#000019,#000005,#000014,#000622,#00132f,#001d39,#00213d,#001e3a,#001531,#000824,#000017,#000007,#000015,#00122e,#00435f,#0a5874,#0f5d79,#1c6a86,#0d5b77,#0c5a76,#0d5b77,#0e5c78,#0f5d79,#0f5d79,#0f5d79 180deg)"></i>
<i style="width:247px;height:247px;margin:-123.5px;background:repeating-conic-gradient(from 90deg,#1a6884 0,#186682,#115f7b,#0f5d79,#0e5c78,#0d5b77,#0c5a76,#0e5c78,#22708c,#0d5b77,#065470,#003d59,#000925,#000011,#000009,#000018,#000723,#00102c,#001531,#001430,#000c28,#00031f,#000013,#000006,#000018,#001935,#004662,#0b5975,#0f5d79,#186682,#0c5a76,#0d5b77,#0e5c78,#0f5d79,#0f5d79,#14627e,#1a6884 180deg)"></i>
<i style="width:245px;height:245px;margin:-122.5px;background:repeating-conic-gradient(from 90deg,#22708c 0,#23718d,#1d6b87,#105e7a,#0f5d79,#0e5c78,#0d5b77,#0c5a76,#186682,#0f5d79,#0b5975,#004662,#001b37,#000019,#000008,#000010,#00001b,#000622,#000a26,#000925,#000521,#000018,#00000c,#00000c,#00021e,#002945,#004c68,#0c5a76,#15637f,#0f5d79,#0c5a76,#0d5b77,#0e5c78,#0f5d79,#14627e,#206e8a,#22708c 180deg)"></i>
<i style="width:243px;height:243px;margin:-121.5px;background:repeating-conic-gradient(from 90deg,#166480 0,#176581,#1e6c88,#1c6a86,#0f5d79,#0e5c78,#0d5b77,#0c5a76,#0f5d79,#196783,#0c5a76,#014f6b,#00314d,#000622,#000010,#000008,#000013,#00001b,#00021e,#00021e,#00001a,#000012,#000006,#000013,#000925,#003955,#04526e,#0d5b77,#1e6c88,#0e5c78,#0c5a76,#0d5b77,#0e5c78,#0f5d79,#1f6d89,#1c6a86,#166480 180deg)"></i>
<i style="width:241px;height:241px;margin:-120.5px;background:repeating-conic-gradient(from 90deg,#0f5d79 0,#0f5d79,#12607c,#1e6c88,#166480,#0f5d79,#0e5c78,#0c5a76,#0d5b77,#216f8b,#0e5c78,#0a5874,#00415d,#00122e,#000018,#000009,#00000b,#000013,#000017,#000017,#000013,#00000b,#00000a,#000019,#001430,#00425e,#0a5874,#0e5c78,#1f6d89,#0d5b77,#0c5a76,#0e5c78,#0f5d79,#176581,#1e6c88,#115f7b,#0f5d79 180deg)"></i>
<i style="width:239px;height:239px;margin:-119.5px;background:repeating-conic-gradient(from 90deg,#0d5b77 0,#0d5b77,#0e5c78,#12607c,#23718d,#0f5d79,#0e5c78,#0d5b77,#0c5a76,#13617d,#0f5d79,#0b5975,#004a66,#002844,#000420,#000011,#000006,#00000c,#000010,#000010,#00000c,#000005,#000010,#00031f,#002440,#004864,#0b5975,#0f5d79,#166480,#0c5a76,#0d5b77,#0e5c78,#0f5d79,#216f8b,#13617d,#0e5c78,#0d5b77 180deg)"></i>
<i style="width:237px;height:237px;margin:-118.5px;background:repeating-conic-gradient(from 90deg,#0c5a76 0,#0c5a76,#0d5b77,#0e5c78,#186682,#186682,#0f5d79,#0d5b77,#0c5a76,#0e5c78,#1c6a86,#0d5b77,#04526e,#003d59,#000e2a,#000019,#00000d,#000005,#000008,#000009,#000005,#00000c,#000017,#000a26,#003551,#004e6a,#0c5a76,#166480,#0f5d79,#0c5a76,#0d5b77,#0f5d79,#13617d,#1c6a86,#0f5d79,#0d5b77,#0c5a76 180deg)"></i>
<i style="width:235px;height:235px;margin:-117.5px;background:repeating-conic-gradient(from 90deg,#0c5a76 0,#0c5a76,#0c5a76,#0d5b77,#0f5d79,#22708c,#0f5d79,#0e5c78,#0d5b77,#0c5a76,#1e6c88,#0e5c78,#0a5874,#004662,#00233f,#000521,#000015,#00000c,#000008,#000007,#00000b,#000012,#00011d,#001733,#00405c,#075571,#0d5b77,#1f6d89,#0e5c78,#0c5a76,#0e5c78,#0f5d79,#1d6b87,#12607c,#0d5b77,#0c5a76,#0c5a76 180deg)"></i>
<i style="width:233px;height:233px;margin:-116.5px;background:repeating-conic-gradient(from 90deg,#0c5a76 0,#0c5a76,#0c5a76,#0c5a76,#0d5b77,#166480,#166480,#0f5d79,#0d5b77,#0c5a76,#105e7a,#12607c,#0c5a76,#004e6a,#003854,#000f2b,#00011d,#000014,#00000f,#00000e,#000011,#000019,#000824,#002743,#004662,#0a5874,#0e5c78,#1f6d89,#0d5b77,#0d5b77,#0e5c78,#0f5d79,#206e8a,#0e5c78,#0c5a76,#0c5a76,#0c5a76 180deg)"></i>
<i style="width:231px;height:231px;margin:-115.5px;background:repeating-conic-gradient(from 90deg,#0c5a76 0,#0c5a76,#0c5a76,#0c5a76,#0c5a76,#0e5c78,#1e6c88,#0f5d79,#0e5c78,#0d5b77,#0d5b77,#1d6b87,#0e5c78,#0a5874,#004965,#00314d,#000e2a,#00031f,#000019,#000017,#000018,#00021e,#000d29,#002f4b,#004864,#0a5874,#0e5c78,#206e8a,#0d5b77,#0d5b77,#0e5c78,#0f5d79,#206e8a,#0e5c78,#0c5a76,#0c5a76,#0c5a76 180deg)"></i>
<i style="width:229px;height:229px;margin:-114.5px;background:repeating-conic-gradient(from 90deg,#0d5b77 0,#0d5b77,#0d5b77,#0c5a76,#0c5a76,#0c5a76,#0f5d79,#1f6d89,#0f5d79,#0e5c78,#0c5a76,#0e5c78,#1e6c88,#0d5b77,#0a5874,#004662,#002f4b,#00122e,#000723,#00031f,#000420,#000824,#001935,#003854,#004b67,#0a5874,#0e5c78,#206e8a,#0d5b77,#0c5a76,#0e5c78,#0f5d79,#206e8a,#0e5c78,#0c5a76,#0c5a76,#0d5b77 180deg)"></i>
<i style="width:227px;height:227px;margin:-113.5px;background:repeating-conic-gradient(from 90deg,#0d5b77 0,#0d5b77,#0d5b77,#0d5b77,#0c5a76,#0c5a76,#0d5b77,#15637f,#14627e,#0e5c78,#0d5b77,#0c5a76,#13617d,#13617d,#0c5a76,#065470,#004460,#00304c,#001a36,#000e2a,#000c28,#001430,#002642,#003f5b,#004d69,#0b5975,#0e5c78,#206e8a,#0d5b77,#0c5a76,#0e5c78,#0f5d79,#206e8a,#0e5c78,#0c5a76,#0c5a76,#0d5b77 180deg)"></i>
<i style="width:225px;height:225px;margin:-112.5px;background:repeating-conic-gradient(from 90deg,#0d5b77 0,#0d5b77,#0d5b77,#0d5b77,#0d5b77,#0c5a76,#0c5a76,#0e5c78,#1f6d89,#0f5d79,#0e5c78,#0c5a76,#0d5b77,#1e6c88,#0f5d79,#0b5975,#03516d,#004460,#003652,#002743,#00213d,#002642,#003551,#004460,#03516d,#0b5975,#0f5d79,#1f6d89,#0d5b77,#0c5a76,#0e5c78,#0f5d79,#216f8b,#0e5c78,#0c5a76,#0c5a76,#0d5b77 180deg)"></i>
<i style="width:223px;height:223px;margin:-111.5px;background:repeating-conic-gradient(from 90deg,#0d5b77 0,#0d5b77,#0e5c78,#0e5c78,#0d5b77,#0d5b77,#0c5a76,#0c5a76,#0f5d79,#1d6b87,#0f5d79,#0d5b77,#0c5a76,#0e5c78,#1f6d89,#0e5c78,#0b5975,#02506c,#004662,#003f5b,#003854,#003955,#00405c,#004864,#065470,#0c5a76,#0f5d79,#1f6d89,#0d5b77,#0c5a76,#0e5c78,#0f5d79,#216f8b,#0e5c78,#0c5a76,#0c5a76,#0d5b77 180deg)"></i>
<i style="width:221px;height:221px;margin:-110.5px;background:repeating-conic-gradient(from 90deg,#0d5b77 0,#0e5c78,#0e5c78,#0e5c78,#0e5c78,#0d5b77,#0d5b77,#0c5a76,#0d5b77,#176581,#115f7b,#0e5c78,#0d5b77,#0c5a76,#12607c,#176581,#0d5b77,#0a5874,#03516d,#004965,#004460,#004460,#004763,#004e6a,#0a5874,#0c5a76,#0f5d79,#1d6b87,#0d5b77,#0c5a76,#0e5c78,#0f5d79,#22708c,#0e5c78,#0c5a76,#0d5b77,#0d5b77 180deg)"></i>
<i style="width:219px;height:219px;margin:-109.5px;background:repeating-conic-gradient(from 90deg,#0d5b77 0,#0e5c78,#0e5c78,#0e5c78,#0e5c78,#0e5c78,#0d5b77,#0d5b77,#0c5a76,#0e5c78,#22708c,#0f5d79,#0e5c78,#0c5a76,#0d5b77,#1b6985,#115f7b,#0d5b77,#0a5874,#05536f,#004e6a,#004c68,#004e6a,#05536f,#0a5874,#0d5b77,#105e7a,#1c6a86,#0d5b77,#0c5a76,#0e5c78,#0f5d79,#23718d,#0e5c78,#0c5a76,#0d5b77,#0d5b77 180deg)"></i>
<i style="width:217px;height:217px;margin:-108.5px;background:repeating-conic-gradient(from 90deg,#0d5b77 0,#0e5c78,#0e5c78,#0e5c78,#0e5c78,#0e5c78,#0e5c78,#0d5b77,#0d5b77,#0c5a76,#0e5c78,#22708c,#0f5d79,#0e5c78,#0c5a76,#0d5b77,#176581,#15637f,#0e5c78,#0b5975,#0a5874,#075571,#065470,#095773,#0b5975,#0c5a76,#0f5d79,#23718d,#0e5c78,#0c5a76,#0d5b77,#0e5c78,#176581,#115f7b,#0c5a76,#0c5a76,#0d5b77 180deg)"></i>
<i style="width:215px;height:215px;margin:-107.5px;background:repeating-conic-gradient(from 90deg,#0d5b77 0,#0d5b77,#0e5c78,#0e5c78,#0f5d79,#0f5d79,#0e5c78,#0e5c78,#0e5c78,#0d5b77,#0c5a76,#0d5b77,#1e6c88,#0f5d79,#0e5c78,#0d5b77,#0c5a76,#105e7a,#1d6b87,#0f5d79,#0d5b77,#0b5975,#0a5874,#0a5874,#0b5975,#0c5a76,#0e5c78,#1b6985,#14627e,#0c5a76,#0c5a76,#0e5c78,#0f5d79,#216f8b,#0e5c78,#0c5a76,#0d5b77 180deg)"></i>
<i style="width:213px;height:213px;margin:-106.5px;background:repeating-conic-gradient(from 90deg,#0c5a76 0,#0d5b77,#0e5c78,#0e5c78,#0f5d79,#0f5d79,#0f5d79,#0f5d79,#0e5c78,#0e5c78,#0d5b77,#0c5a76,#0d5b77,#196783,#0f5d79,#0e5c78,#0d5b77,#0c5a76,#0f5d79,#22708c,#115f7b,#0e5c78,#0d5b77,#0c5a76,#0c5a76,#0d5b77,#0e5c78,#15637f,#1d6b87,#0e5c78,#0c5a76,#0d5b77,#0e5c78,#15637f,#12607c,#0c5a76,#0c5a76 180deg)"></i>
<i style="width:211px;height:211px;margin:-105.5px;background:repeating-conic-gradient(from 90deg,#0c5a76 0,#0d5b77,#0e5c78,#0e5c78,#0f5d79,#0f5d79,#0f5d79,#0f5d79,#0f5d79,#0e5c78,#0e5c78,#0d5b77,#0c5a76,#0c5a76,#15637f,#12607c,#0e5c78,#0d5b77,#0c5a76,#0e5c78,#1a6884,#1a6884,#0f5d79,#0e5c78,#0d5b77,#0e5c78,#0e5c78,#13617d,#23718d,#0f5d79,#0c5a76,#0d5b77,#0e5c78,#0f5d79,#23718d,#0e5c78,#0c5a76 180deg)"></i>
<i style="width:209px;height:209px;margin:-104.5px;background:repeating-conic-gradient(from 90deg,#0c5a76 0,#0c5a76,#0d5b77,#0e5c78,#0f5d79,#0f5d79,#0f5d79,#0f5d79,#0f5d79,#0f5d79,#0f5d79,#0e5c78,#0d5b77,#0c5a76,#0c5a76,#115f7b,#176581,#0f5d79,#0d5b77,#0c5a76,#0d5b77,#12607c,#23718d,#166480,#0f5d79,#0f5d79,#0f5d79,#14627e,#216f8b,#14627e,#0d5b77,#0c5a76,#0d5b77,#0e5c78,#13617d,#14627e,#0c5a76 180deg)"></i>
<i style="width:207px;height:207px;margin:-103.5px;background:repeating-conic-gradient(from 90deg,#0e5c78 0,#0c5a76,#0d5b77,#0e5c78,#0e5c78,#0f5d79,#0f5d79,#115f7b,#12607c,#105e7a,#0f5d79,#0f5d79,#0e5c78,#0d5b77,#0d5b77,#0c5a76,#0f5d79,#1b6985,#0f5d79,#0e5c78,#0c5a76,#0c5a76,#0f5d79,#1b6985,#206e8a,#186682,#166480,#1a6884,#22708c,#176581,#0e5c78,#0c5a76,#0d5b77,#0e5c78,#0f5d79,#22708c,#0e5c78 180deg)"></i>
<i style="width:205px;height:205px;margin:-102.5px;background:repeating-conic-gradient(from 90deg,#166480 0,#0c5a76,#0c5a76,#0d5b77,#0e5c78,#0f5d79,#0f5d79,#12607c,#166480,#176581,#14627e,#0f5d79,#0f5d79,#0e5c78,#0e5c78,#0d5b77,#0c5a76,#0f5d79,#206e8a,#0f5d79,#0e5c78,#0d5b77,#0c5a76,#0e5c78,#115f7b,#1d6b87,#23718d,#23718d,#206e8a,#176581,#0f5d79,#0c5a76,#0c5a76,#0d5b77,#0e5c78,#13617d,#166480 180deg)"></i>
<i style="width:203px;height:203px;margin:-101.5px;background:repeating-conic-gradient(from 90deg,#22708c 0,#0e5c78,#0c5a76,#0d5b77,#0e5c78,#0e5c78,#0f5d79,#115f7b,#186682,#1b6985,#1c6a86,#186682,#115f7b,#0f5d79,#0e5c78,#0e5c78,#0d5b77,#0c5a76,#0e5c78,#22708c,#0f5d79,#0e5c78,#0d5b77,#0c5a76,#0c5a76,#0e5c78,#12607c,#186682,#186682,#13617d,#0f5d79,#0d5b77,#0c5a76,#0d5b77,#0e5c78,#0f5d79,#22708c 180deg)"></i>
<i style="width:201px;height:201px;margin:-100.5px;background:repeating-conic-gradient(from 90deg,#13617d 0,#176581,#0c5a76,#0c5a76,#0d5b77,#0e5c78,#0f5d79,#0f5d79,#176581,#1d6b87,#206e8a,#206e8a,#1c6a86,#15637f,#0f5d79,#0f5d79,#0e5c78,#0d5b77,#0c5a76,#0d5b77,#1d6b87,#0f5d79,#0e5c78,#0d5b77,#0c5a76,#0c5a76,#0d5b77,#0e5c78,#0f5d79,#0f5d79,#0e5c78,#0d5b77,#0c5a76,#0d5b77,#0d5b77,#0f5d79,#13617d 180deg)"></i>
<i style="width:199px;height:199px;margin:-99.5px;background:repeating-conic-gradient(from 90deg,#0f5d79 0,#22708c,#0f5d79,#0c5a76,#0d5b77,#0e5c78,#0e5c78,#0f5d79,#14627e,#1d6b87,#23718d,#23718d,#23718d,#206e8a,#186682,#0f5d79,#0f5d79,#0e5c78,#0d5b77,#0c5a76,#0d5b77,#196783,#12607c,#0e5c78,#0e5c78,#0d5b77,#0c5a76,#0c5a76,#0d5b77,#0e5c78,#0d5b77,#0c5a76,#0c5a76,#0c5a76,#0d5b77,#0e5c78,#0f5d79 180deg)"></i>
<i style="width:197px;height:197px;margin:-98.5px;background:repeating-conic-gradient(from 90deg,#0f5d79 0,#14627e,#176581,#0d5b77,#0c5a76,#0d5b77,#0e5c78,#0f5d79,#0f5d79,#1b6985,#23718d,#216f8b,#216f8b,#216f8b,#23718d,#1c6a86,#115f7b,#0f5d79,#0e5c78,#0d5b77,#0c5a76,#0c5a76,#14627e,#176581,#0f5d79,#0e5c78,#0d5b77,#0c5a76,#0c5a76,#0c5a76,#0c5a76,#0c5a76,#0c5a76,#0c5a76,#0d5b77,#0e5c78,#0f5d79 180deg)"></i>
<i style="width:195px;height:195px;margin:-97.5px;background:repeating-conic-gradient(from 90deg,#0e5c78 0,#0f5d79,#23718d,#0f5d79,#0c5a76,#0d5b77,#0e5c78,#0e5c78,#0f5d79,#166480,#216f8b,#216f8b,#1f6d89,#1f6d89,#1f6d89,#22708c,#1f6d89,#14627e,#0f5d79,#0e5c78,#0d5b77,#0c5a76,#0c5a76,#0f5d79,#1d6b87,#0f5d79,#0e5c78,#0d5b77,#0d5b77,#0c5a76,#0c5a76,#0c5a76,#0c5a76,#0c5a76,#0d5b77,#0d5b77,#0e5c78 180deg)"></i>
<i style="width:193px;height:193px;margin:-96.5px;background:repeating-conic-gradient(from 90deg,#0e5c78 0,#0f5d79,#176581,#166480,#0d5b77,#0c5a76,#0d5b77,#0e5c78,#0f5d79,#115f7b,#1d6b87,#22708c,#1f6d89,#1d6b87,#1d6b87,#1e6c88,#206e8a,#22708c,#166480,#0f5d79,#0e5c78,#0d5b77,#0d5b77,#0c5a76,#0f5d79,#22708c,#0f5d79,#0e5c78,#0e5c78,#0d5b77,#0d5b77,#0c5a76,#0c5a76,#0c5a76,#0d5b77,#0d5b77,#0e5c78 180deg)"></i>
<i style="width:191px;height:191px;margin:-95.5px;background:repeating-conic-gradient(from 90deg,#0e5c78 0,#0f5d79,#0f5d79,#216f8b,#0e5c78,#0c5a76,#0d5b77,#0e5c78,#0e5c78,#0f5d79,#186682,#23718d,#1f6d89,#1c6a86,#1b6985,#1b6985,#1c6a86,#1f6d89,#23718d,#196783,#0f5d79,#0e5c78,#0e5c78,#0d5b77,#0c5a76,#0e5c78,#1f6d89,#105e7a,#0f5d79,#0e5c78,#0d5b77,#0d5b77,#0d5b77,#0d5b77,#0d5b77,#0d5b77,#0e5c78 180deg)"></i>
<i style="width:189px;height:189px;margin:-94.5px;background:repeating-conic-gradient(from 90deg,#0e5c78 0,#0e5c78,#0f5d79,#1c6a86,#13617d,#0d5b77,#0c5a76,#0d5b77,#0e5c78,#0f5d79,#115f7b,#1f6d89,#206e8a,#1d6b87,#1a6884,#196783,#196783,#1a6884,#1d6b87,#22708c,#1c6a86,#0f5d79,#0f5d79,#0e5c78,#0d5b77,#0c5a76,#0d5b77,#196783,#176581,#0f5d79,#0e5c78,#0e5c78,#0d5b77,#0d5b77,#0d5b77,#0d5b77,#0e5c78 180deg)"></i>
<i style="width:187px;height:187px;margin:-93.5px;background:repeating-conic-gradient(from 90deg,#0e5c78 0,#0e5c78,#0f5d79,#15637f,#1d6b87,#0e5c78,#0c5a76,#0d5b77,#0d5b77,#0e5c78,#0f5d79,#186682,#23718d,#1e6c88,#1a6884,#186682,#176581,#176581,#196783,#1c6a86,#206e8a,#1e6c88,#105e7a,#0f5d79,#0e5c78,#0d5b77,#0c5a76,#0d5b77,#13617d,#1d6b87,#0f5d79,#0f5d79,#0e5c78,#0e5c78,#0e5c78,#0e5c78,#0e5c78 180deg)"></i>
<i style="width:185px;height:185px;margin:-92.5px;background:repeating-conic-gradient(from 90deg,#0e5c78 0,#0e5c78,#0f5d79,#105e7a,#22708c,#0f5d79,#0c5a76,#0c5a76,#0d5b77,#0e5c78,#0f5d79,#115f7b,#206e8a,#206e8a,#1b6985,#186682,#15637f,#15637f,#15637f,#176581,#1b6985,#1f6d89,#216f8b,#12607c,#0f5d79,#0e5c78,#0d5b77,#0c5a76,#0c5a76,#0f5d79,#23718d,#115f7b,#0f5d79,#0e5c78,#0e5c78,#0e5c78,#0e5c78 180deg)"></i>
<i style="width:183px;height:183px;margin:-91.5px;background:repeating-conic-gradient(from 90deg,#0f5d79 0,#0f5d79,#0f5d79,#0f5d79,#1d6b87,#176581,#0e5c78,#0c5a76,#0d5b77,#0d5b77,#0e5c78,#0f5d79,#196783,#22708c,#1d6b87,#186682,#15637f,#13617d,#13617d,#14627e,#166480,#196783,#1e6c88,#23718d,#15637f,#0f5d79,#0e5c78,#0d5b77,#0c5a76,#0c5a76,#0e5c78,#1c6a86,#196783,#0f5d79,#0f5d79,#0f5d79,#0f5d79 180deg)"></i>
<i style="width:181px;height:181px;margin:-90.5px;background:repeating-conic-gradient(from 90deg,#0f5d79 0,#0f5d79,#0f5d79,#0f5d79,#1b6985,#1d6b87,#0f5d79,#0c5a76,#0c5a76,#0d5b77,#0e5c78,#0f5d79,#115f7b,#206e8a,#1f6d89,#1a6884,#166480,#13617d,#115f7b,#115f7b,#12607c,#14627e,#186682,#1d6b87,#22708c,#176581,#0f5d79,#0e5c78,#0d5b77,#0d5b77,#0c5a76,#0e5c78,#15637f,#216f8b,#13617d,#0f5d79,#0f5d79 180deg)"></i>
<i style="width:179px;height:179px;margin:-89.5px;background:repeating-conic-gradient(from 90deg,#13617d 0,#0f5d79,#0f5d79,#13617d,#1b6985,#1f6d89,#0f5d79,#0d5b77,#0c5a76,#0d5b77,#0d5b77,#0e5c78,#0f5d79,#186682,#22708c,#1c6a86,#176581,#13617d,#115f7b,#0f5d79,#0f5d79,#105e7a,#13617d,#176581,#1c6a86,#216f8b,#1a6884,#0f5d79,#0e5c78,#0e5c78,#0d5b77,#0c5a76,#0d5b77,#0f5d79,#1e6c88,#1c6a86,#13617d 180deg)"></i>
<i style="width:177px;height:177px;margin:-88.5px;background:repeating-conic-gradient(from 90deg,#22708c 0,#1d6b87,#196783,#1a6884,#1e6c88,#206e8a,#13617d,#0e5c78,#0c5a76,#0c5a76,#0d5b77,#0e5c78,#0f5d79,#105e7a,#206e8a,#1f6d89,#196783,#15637f,#115f7b,#0f5d79,#0d5b77,#0e5c78,#0f5d79,#12607c,#15637f,#1a6884,#206e8a,#1d6b87,#0f5d79,#0f5d79,#0e5c78,#0d5b77,#0c5a76,#0c5a76,#0e5c78,#166480,#22708c 180deg)"></i>
<i style="width:175px;height:175px;margin:-87.5px;background:repeating-conic-gradient(from 90deg,#0f5d79 0,#196783,#206e8a,#23718d,#22708c,#1d6b87,#14627e,#0e5c78,#0c5a76,#0c5a76,#0d5b77,#0d5b77,#0e5c78,#0f5d79,#176581,#22708c,#1c6a86,#176581,#12607c,#0f5d79,#0d5b77,#0c5a76,#0c5a76,#0d5b77,#105e7a,#14627e,#196783,#1f6d89,#206e8a,#105e7a,#0f5d79,#0e5c78,#0d5b77,#0c5a76,#0c5a76,#0d5b77,#0f5d79 180deg)"></i>
<i style="width:173px;height:173px;margin:-86.5px;background:repeating-conic-gradient(from 90deg,#0c5a76 0,#0e5c78,#115f7b,#186682,#1b6985,#196783,#14627e,#0f5d79,#0d5b77,#0c5a76,#0c5a76,#0d5b77,#0e5c78,#0f5d79,#0f5d79,#1e6c88,#1f6d89,#196783,#14627e,#0f5d79,#0c5a76,#0a5874,#0a5874,#0a5874,#0b5975,#0e5c78,#12607c,#176581,#1d6b87,#23718d,#14627e,#0f5d79,#0e5c78,#0d5b77,#0d5b77,#0c5a76,#0c5a76 180deg)"></i>
<i style="width:171px;height:171px;margin:-85.5px;background:repeating-conic-gradient(from 90deg,#0c5a76 0,#0c5a76,#0d5b77,#0f5d79,#105e7a,#12607c,#105e7a,#0f5d79,#0d5b77,#0c5a76,#0c5a76,#0d5b77,#0d5b77,#0e5c78,#0f5d79,#166480,#23718d,#1c6a86,#166480,#115f7b,#0d5b77,#0a5874,#085672,#085672,#085672,#0a5874,#0c5a76,#105e7a,#15637f,#1b6985,#22708c,#176581,#0f5d79,#0e5c78,#0e5c78,#0d5b77,#0c5a76 180deg)"></i>
<i style="width:169px;height:169px;margin:-84.5px;background:repeating-conic-gradient(from 90deg,#0d5b77 0,#0c5a76,#0c5a76,#0c5a76,#0e5c78,#0e5c78,#0f5d79,#0e5c78,#0e5c78,#0c5a76,#0c5a76,#0c5a76,#0d5b77,#0e5c78,#0f5d79,#0f5d79,#1d6b87,#206e8a,#196783,#13617d,#0e5c78,#0a5874,#085672,#075571,#065470,#075571,#085672,#0b5975,#0f5d79,#14627e,#1a6884,#206e8a,#1b6985,#0f5d79,#0e5c78,#0e5c78,#0d5b77 180deg)"></i>
<i style="width:167px;height:167px;margin:-83.5px;background:repeating-conic-gradient(from 90deg,#0e5c78 0,#0d5b77,#0d5b77,#0c5a76,#0c5a76,#0d5b77,#0d5b77,#0e5c78,#0d5b77,#0c5a76,#0c5a76,#0c5a76,#0d5b77,#0d5b77,#0e5c78,#0f5d79,#14627e,#23718d,#1c6a86,#166480,#105e7a,#0b5975,#085672,#065470,#05536f,#04526e,#05536f,#075571,#095773,#0d5b77,#12607c,#186682,#1f6d89,#1e6c88,#0f5d79,#0f5d79,#0e5c78 180deg)"></i>
<i style="width:165px;height:165px;margin:-82.5px;background:repeating-conic-gradient(from 90deg,#0f5d79 0,#0e5c78,#0d5b77,#0d5b77,#0c5a76,#0c5a76,#0c5a76,#0c5a76,#0c5a76,#0c5a76,#0c5a76,#0c5a76,#0c5a76,#0d5b77,#0e5c78,#0e5c78,#0f5d79,#1b6985,#206e8a,#196783,#13617d,#0d5b77,#095773,#065470,#04526e,#03516d,#03516d,#03516d,#05536f,#085672,#0b5975,#105e7a,#176581,#1d6b87,#22708c,#12607c,#0f5d79 180deg)"></i>
<i style="width:163px;height:163px;margin:-81.5px;background:repeating-conic-gradient(from 90deg,#15637f 0,#0f5d79,#0e5c78,#0e5c78,#0d5b77,#0c5a76,#0c5a76,#0c5a76,#0c5a76,#0c5a76,#0c5a76,#0c5a76,#0c5a76,#0d5b77,#0d5b77,#0e5c78,#0f5d79,#12607c,#22708c,#1d6b87,#166480,#105e7a,#0b5975,#075571,#04526e,#02506c,#014f6b,#014f6b,#02506c,#04526e,#065470,#0a5874,#0f5d79,#15637f,#1c6a86,#23718d,#15637f 180deg)"></i>
<i style="width:161px;height:161px;margin:-80.5px;background:repeating-conic-gradient(from 90deg,#216f8b 0,#196783,#0f5d79,#0e5c78,#0e5c78,#0d5b77,#0d5b77,#0c5a76,#0c5a76,#0c5a76,#0c5a76,#0c5a76,#0c5a76,#0d5b77,#0d5b77,#0e5c78,#0e5c78,#0f5d79,#196783,#216f8b,#1a6884,#13617d,#0d5b77,#095773,#05536f,#02506c,#004e6a,#004d69,#004d69,#004e6a,#02506c,#05536f,#095773,#0d5b77,#14627e,#1a6884,#216f8b 180deg)"></i>
<i style="width:159px;height:159px;margin:-79.5px;background:repeating-conic-gradient(from 90deg,#196783 0,#206e8a,#1c6a86,#0f5d79,#0f5d79,#0e5c78,#0d5b77,#0d5b77,#0c5a76,#0c5a76,#0c5a76,#0c5a76,#0c5a76,#0d5b77,#0d5b77,#0d5b77,#0e5c78,#0f5d79,#105e7a,#206e8a,#1e6c88,#176581,#105e7a,#0b5975,#065470,#03516d,#004e6a,#004d69,#004c68,#004c68,#004d69,#014f6b,#04526e,#075571,#0c5a76,#12607c,#196783 180deg)"></i>
<i style="width:157px;height:157px;margin:-78.5px;background:repeating-conic-gradient(from 90deg,#115f7b 0,#186682,#1f6d89,#1e6c88,#0f5d79,#0f5d79,#0e5c78,#0d5b77,#0d5b77,#0d5b77,#0c5a76,#0c5a76,#0c5a76,#0d5b77,#0d5b77,#0d5b77,#0e5c78,#0e5c78,#0f5d79,#186682,#22708c,#1b6985,#14627e,#0d5b77,#085672,#04526e,#014f6b,#004c68,#004965,#004864,#004864,#004c68,#004e6a,#03516d,#075571,#0b5975,#115f7b 180deg)"></i>
<i style="width:155px;height:155px;margin:-77.5px;background:repeating-conic-gradient(from 90deg,#0b5975 0,#12607c,#186682,#1f6d89,#1d6b87,#0f5d79,#0f5d79,#0e5c78,#0e5c78,#0d5b77,#0d5b77,#0d5b77,#0d5b77,#0d5b77,#0d5b77,#0d5b77,#0e5c78,#0e5c78,#0f5d79,#14627e,#23718d,#1d6b87,#166480,#0f5d79,#095773,#05536f,#014f6b,#004c68,#004763,#004460,#004460,#004561,#004965,#004d69,#02506c,#065470,#0b5975 180deg)"></i>
<i style="width:153px;height:153px;margin:-76.5px;background:repeating-conic-gradient(from 90deg,#075571 0,#0b5975,#12607c,#196783,#206e8a,#1c6a86,#0f5d79,#0f5d79,#0e5c78,#0e5c78,#0d5b77,#0d5b77,#0d5b77,#0d5b77,#0d5b77,#0d5b77,#0e5c78,#0e5c78,#0f5d79,#0f5d79,#1e6c88,#1f6d89,#186682,#115f7b,#0b5975,#065470,#02506c,#004c68,#004763,#00425e,#00405c,#00405c,#00425e,#004763,#004d69,#02506c,#075571 180deg)"></i>
<i style="width:151px;height:151px;margin:-75.5px;background:repeating-conic-gradient(from 90deg,#02506c 0,#075571,#0c5a76,#12607c,#196783,#206e8a,#1b6985,#0f5d79,#0f5d79,#0e5c78,#0e5c78,#0d5b77,#0d5b77,#0d5b77,#0d5b77,#0d5b77,#0e5c78,#0e5c78,#0f5d79,#0f5d79,#1a6884,#216f8b,#1a6884,#13617d,#0c5a76,#075571,#03516d,#004d69,#004662,#00405c,#003d59,#003b57,#003c58,#00405c,#004662,#004c68,#02506c 180deg)"></i>
<i style="width:149px;height:149px;margin:-74.5px;background:repeating-conic-gradient(from 90deg,#004c68 0,#02506c,#075571,#0c5a76,#13617d,#1a6884,#216f8b,#1b6985,#0f5d79,#0f5d79,#0e5c78,#0e5c78,#0e5c78,#0d5b77,#0d5b77,#0d5b77,#0e5c78,#0e5c78,#0f5d79,#0f5d79,#166480,#23718d,#1c6a86,#15637f,#0e5c78,#095773,#04526e,#004d69,#004763,#00405c,#003b57,#003854,#003753,#003a56,#003e5a,#004561,#004c68 180deg)"></i>
<i style="width:147px;height:147px;margin:-73.5px;background:repeating-conic-gradient(from 90deg,#004460 0,#004c68,#02506c,#075571,#0d5b77,#14627e,#1a6884,#216f8b,#1a6884,#0f5d79,#0f5d79,#0e5c78,#0e5c78,#0e5c78,#0e5c78,#0e5c78,#0e5c78,#0e5c78,#0f5d79,#0f5d79,#12607c,#206e8a,#1e6c88,#186682,#115f7b,#0a5874,#05536f,#014f6b,#004965,#00405c,#003a56,#003551,#003450,#003450,#003753,#003c58,#004460 180deg)"></i>
<i style="width:145px;height:145px;margin:-72.5px;background:repeating-conic-gradient(from 90deg,#003b57 0,#00435f,#004c68,#03516d,#085672,#0d5b77,#14627e,#1b6985,#22708c,#1a6884,#0f5d79,#0f5d79,#0e5c78,#0e5c78,#0e5c78,#0e5c78,#0e5c78,#0e5c78,#0e5c78,#0f5d79,#0f5d79,#1c6a86,#216f8b,#1a6884,#13617d,#0c5a76,#075571,#02506c,#004b67,#00415d,#003a56,#003450,#002f4b,#002d49,#002f4b,#003551,#003b57 180deg)"></i>
<i style="width:143px;height:143px;margin:-71.5px;background:repeating-conic-gradient(from 90deg,#00334f 0,#003a56,#00435f,#004c68,#03516d,#085672,#0e5c78,#15637f,#1c6a86,#22708c,#196783,#0f5d79,#0f5d79,#0f5d79,#0e5c78,#0e5c78,#0e5c78,#0e5c78,#0e5c78,#0f5d79,#0f5d79,#196783,#22708c,#1c6a86,#15637f,#0e5c78,#085672,#03516d,#004c68,#00435f,#003a56,#00334f,#002b47,#002743,#002743,#002b47,#00334f 180deg)"></i>
<i style="width:141px;height:141px;margin:-70.5px;background:repeating-conic-gradient(from 90deg,#002743 0,#00304c,#003955,#00435f,#004c68,#03516d,#085672,#0e5c78,#15637f,#1c6a86,#22708c,#196783,#0f5d79,#0f5d79,#0f5d79,#0e5c78,#0e5c78,#0e5c78,#0f5d79,#0f5d79,#0f5d79,#166480,#22708c,#1e6c88,#176581,#105e7a,#0a5874,#05536f,#004e6a,#004662,#003c58,#003450,#002a46,#00233f,#00203c,#00223e,#002743 180deg)"></i>
<i style="width:139px;height:139px;margin:-69.5px;background:repeating-conic-gradient(from 90deg,#001d39 0,#002440,#002f4b,#003955,#00435f,#004d69,#04526e,#095773,#0f5d79,#166480,#1c6a86,#23718d,#196783,#0f5d79,#0f5d79,#0f5d79,#0f5d79,#0f5d79,#0f5d79,#0f5d79,#0f5d79,#14627e,#1f6d89,#206e8a,#196783,#13617d,#0c5a76,#065470,#014f6b,#004965,#003e5a,#003551,#002945,#00203c,#001b37,#001a36,#001d39 180deg)"></i>
<i style="width:137px;height:137px;margin:-68.5px;background:repeating-conic-gradient(from 90deg,#001531 0,#001935,#00223e,#002d49,#003955,#00435f,#004d69,#04526e,#095773,#105e7a,#166480,#1d6b87,#23718d,#1a6884,#105e7a,#0f5d79,#0f5d79,#0f5d79,#0f5d79,#0f5d79,#0f5d79,#12607c,#1c6a86,#216f8b,#1b6985,#15637f,#0e5c78,#085672,#03516d,#004c68,#00415d,#003753,#002b47,#001f3b,#001834,#001430,#001531 180deg)"></i>
<i style="width:135px;height:135px;margin:-67.5px;background:repeating-conic-gradient(from 90deg,#000e2a 0,#00102c,#001632,#00203c,#002d49,#003955,#004460,#004d69,#05536f,#0a5874,#105e7a,#176581,#1d6b87,#23718d,#1a6884,#12607c,#0f5d79,#0f5d79,#0f5d79,#0f5d79,#0f5d79,#12607c,#1a6884,#23718d,#1d6b87,#176581,#105e7a,#0a5874,#05536f,#004e6a,#004561,#003955,#002d49,#00203c,#001632,#00102c,#000e2a 180deg)"></i>
<i style="width:133px;height:133px;margin:-66.5px;background:repeating-conic-gradient(from 90deg,#000925 0,#000925,#000c28,#00132f,#001e3a,#002c48,#003955,#004561,#004e6a,#05536f,#0a5874,#115f7b,#176581,#1d6b87,#23718d,#1b6985,#14627e,#0f5d79,#0f5d79,#0f5d79,#0f5d79,#12607c,#196783,#23718d,#1f6d89,#196783,#13617d,#0c5a76,#075571,#014f6b,#004864,#003c58,#00314d,#00223e,#001632,#000e2a,#000925 180deg)"></i>
<i style="width:131px;height:131px;margin:-65.5px;background:repeating-conic-gradient(from 90deg,#000521 0,#00021e,#00031f,#000824,#00112d,#001d39,#002c48,#003a56,#004662,#004e6a,#065470,#0b5975,#12607c,#186682,#1e6c88,#23718d,#1c6a86,#15637f,#115f7b,#0f5d79,#0f5d79,#12607c,#186682,#206e8a,#206e8a,#1b6985,#15637f,#0e5c78,#085672,#03516d,#004c68,#00405c,#003450,#002440,#001632,#000c28,#000521 180deg)"></i>
<i style="width:129px;height:129px;margin:-64.5px;background:repeating-conic-gradient(from 90deg,#00011d 0,#000017,#000015,#000018,#00021e,#000d29,#001a36,#002b47,#003a56,#004763,#014f6b,#065470,#0c5a76,#12607c,#196783,#1e6c88,#23718d,#1c6a86,#166480,#12607c,#115f7b,#13617d,#176581,#1e6c88,#22708c,#1d6b87,#176581,#115f7b,#0a5874,#05536f,#004e6a,#004460,#003753,#002743,#001733,#000a26,#00011d 180deg)"></i>
<i style="width:127px;height:127px;margin:-63.5px;background:repeating-conic-gradient(from 90deg,#000019 0,#000012,#000010,#000010,#000013,#00001b,#000b27,#001a36,#002c48,#003c58,#004965,#02506c,#075571,#0d5b77,#14627e,#1a6884,#1f6d89,#23718d,#1b6985,#166480,#14627e,#14627e,#176581,#1d6b87,#23718d,#1e6c88,#196783,#13617d,#0c5a76,#065470,#014f6b,#004763,#003955,#002945,#001733,#000824,#000019 180deg)"></i>
<i style="width:125px;height:125px;margin:-62.5px;background:repeating-conic-gradient(from 90deg,#000016 0,#000010,#00000d,#00000c,#00000d,#000010,#000018,#000a26,#001b37,#002f4b,#003e5a,#004c68,#03516d,#095773,#0f5d79,#15637f,#1b6985,#206e8a,#22708c,#1b6985,#176581,#166480,#186682,#1c6a86,#23718d,#206e8a,#1a6884,#15637f,#0e5c78,#085672,#02506c,#004a66,#003c58,#002c48,#001935,#000824,#000016 180deg)"></i>
<i style="width:123px;height:123px;margin:-61.5px;background:repeating-conic-gradient(from 90deg,#000015 0,#00000e,#00000a,#000008,#000008,#00000a,#00000f,#000017,#000b27,#001d39,#00334f,#00415d,#004d69,#05536f,#0a5874,#115f7b,#176581,#1d6b87,#216f8b,#216f8b,#1b6985,#196783,#196783,#1c6a86,#216f8b,#216f8b,#1c6a86,#166480,#105e7a,#0a5874,#04526e,#004c68,#003f5b,#00304c,#001b37,#000925,#000015 180deg)"></i>
<i style="width:121px;height:121px;margin:-60.5px;background:repeating-conic-gradient(from 90deg,#000015 0,#00000d,#000007,#000004,#000003,#000004,#000008,#00000d,#000016,#000c28,#00203c,#003652,#004460,#004e6a,#065470,#0c5a76,#12607c,#186682,#1e6c88,#22708c,#206e8a,#1c6a86,#1b6985,#1c6a86,#216f8b,#22708c,#1d6b87,#186682,#12607c,#0b5975,#065470,#004e6a,#00435f,#003551,#001f3b,#000b27,#000015 180deg)"></i>
<i style="width:119px;height:119px;margin:-59.5px;background:repeating-conic-gradient(from 90deg,#000017 0,#00000d,#000006,#000003,#000002,#000002,#000003,#000006,#00000d,#000017,#000f2b,#002440,#003955,#004864,#02506c,#085672,#0e5c78,#14627e,#1a6884,#1f6d89,#22708c,#206e8a,#1d6b87,#1d6b87,#206e8a,#22708c,#1f6d89,#1a6884,#14627e,#0d5b77,#075571,#02506c,#004763,#003854,#002440,#000e2a,#000017 180deg)"></i>
<i style="width:117px;height:117px;margin:-58.5px;background:repeating-conic-gradient(from 90deg,#000019 0,#00000d,#000005,#000002,#000002,#000001,#000002,#000002,#000005,#00000d,#000019,#00122e,#002945,#003c58,#004b67,#03516d,#095773,#105e7a,#166480,#1b6985,#206e8a,#23718d,#216f8b,#1f6d89,#216f8b,#23718d,#206e8a,#1b6985,#166480,#105e7a,#095773,#03516d,#004c68,#003c58,#002945,#00122e,#000019 180deg)"></i>
<i style="width:115px;height:115px;margin:-57.5px;background:repeating-conic-gradient(from 90deg,#00011d 0,#00000e,#000005,#000002,#000001,#000000,#000000,#000001,#000002,#000005,#00000e,#00001c,#001733,#002f4b,#00405c,#004d69,#05536f,#0b5975,#115f7b,#176581,#1c6a86,#206e8a,#23718d,#22708c,#22708c,#23718d,#206e8a,#1d6b87,#186682,#12607c,#0b5975,#05536f,#004d69,#00415d,#00304c,#001733,#00011d 180deg)"></i>
<i style="width:113px;height:113px;margin:-56.5px;background:repeating-conic-gradient(from 90deg,#000622 0,#000010,#000006,#000002,#000000,#000000,#000000,#000000,#000000,#000002,#000005,#00000f,#000420,#001c38,#003551,#004460,#014f6b,#075571,#0d5b77,#13617d,#196783,#1d6b87,#216f8b,#23718d,#23718d,#23718d,#216f8b,#1e6c88,#196783,#14627e,#0d5b77,#075571,#014f6b,#004662,#003652,#001e3a,#000622 180deg)"></i>
<i style="width:111px;height:111px;margin:-55.5px;background:repeating-conic-gradient(from 90deg,#000c28 0,#000012,#000007,#000002,#000000,#000000,#000000,#000000,#000000,#000000,#000002,#000006,#000011,#000925,#00223e,#003955,#004965,#03516d,#095773,#0f5d79,#15637f,#1a6884,#1e6c88,#216f8b,#23718d,#23718d,#216f8b,#1f6d89,#1b6985,#166480,#0f5d79,#095773,#03516d,#004b67,#003b57,#002541,#000c28 180deg)"></i>
<i style="width:109px;height:109px;margin:-54.5px;background:repeating-conic-gradient(from 90deg,#00132f 0,#000016,#000009,#000002,#000000,#000000,#000001,#000001,#000001,#000000,#000000,#000002,#000007,#000013,#000f2b,#002945,#003e5a,#004c68,#05536f,#0a5874,#115f7b,#176581,#1b6985,#1f6d89,#216f8b,#22708c,#216f8b,#1f6d89,#1c6a86,#176581,#12607c,#0b5975,#05536f,#004d69,#00405c,#002d49,#00132f 180deg)"></i>
<i style="width:107px;height:107px;margin:-53.5px;background:repeating-conic-gradient(from 90deg,#001a36 0,#00001c,#00000b,#000003,#000000,#000000,#000001,#000001,#000001,#000001,#000000,#000000,#000002,#000009,#000018,#001632,#00314d,#00435f,#004e6a,#065470,#0c5a76,#13617d,#186682,#1c6a86,#1f6d89,#216f8b,#216f8b,#206e8a,#1d6b87,#196783,#14627e,#0d5b77,#075571,#014f6b,#004561,#003551,#001a36 180deg)"></i>
<i style="width:105px;height:105px;margin:-52.5px;background:repeating-conic-gradient(from 90deg,#00233f 0,#000824,#00000f,#000003,#000001,#000000,#000001,#000002,#000002,#000002,#000001,#000000,#000000,#000003,#00000c,#00031f,#001d39,#003753,#004864,#02506c,#085672,#0e5c78,#14627e,#196783,#1d6b87,#1f6d89,#206e8a,#206e8a,#1e6c88,#1a6884,#166480,#105e7a,#095773,#04526e,#004b67,#003a56,#00233f 180deg)"></i>
<i style="width:103px;height:103px;margin:-51.5px;background:repeating-conic-gradient(from 90deg,#002c48 0,#00102c,#000012,#000005,#000001,#000000,#000001,#000002,#000002,#000002,#000002,#000001,#000000,#000000,#000003,#00000f,#000a26,#002642,#003c58,#004c68,#04526e,#0a5874,#105e7a,#166480,#1a6884,#1e6c88,#1f6d89,#1f6d89,#1e6c88,#1b6985,#176581,#12607c,#0b5975,#065470,#004e6a,#00405c,#002c48 180deg)"></i>
<i style="width:101px;height:101px;margin:-50.5px;background:repeating-conic-gradient(from 90deg,#003551 0,#001a36,#00001a,#000009,#000002,#000000,#000001,#000002,#000003,#000003,#000003,#000002,#000001,#000000,#000001,#000005,#000013,#00122e,#002e4a,#00425e,#004e6a,#065470,#0c5a76,#12607c,#176581,#1b6985,#1e6c88,#1f6d89,#1e6c88,#1c6a86,#196783,#14627e,#0e5c78,#085672,#02506c,#004662,#003551 180deg)"></i>
<i style="width:99px;height:99px;margin:-49.5px;background:repeating-conic-gradient(from 90deg,#003a56 0,#00213d,#000420,#00000b,#000002,#000000,#000001,#000002,#000003,#000003,#000003,#000003,#000002,#000001,#000000,#000002,#00000a,#00011d,#001e3a,#003854,#004965,#03516d,#095773,#0f5d79,#15637f,#196783,#1c6a86,#1e6c88,#1e6c88,#1c6a86,#196783,#15637f,#105e7a,#095773,#04526e,#004b67,#003a56 180deg)"></i>
<i style="width:97px;height:97px;margin:-48.5px;background:repeating-conic-gradient(from 90deg,#003a56 0,#00213d,#00031f,#00000b,#000002,#000000,#000001,#000003,#000003,#000005,#000005,#000004,#000003,#000002,#000001,#000000,#000005,#000013,#001430,#00324e,#004460,#014f6b,#075571,#0d5b77,#13617d,#186682,#1b6985,#1d6b87,#1d6b87,#1c6a86,#196783,#15637f,#105e7a,#0a5874,#04526e,#004b67,#003a56 180deg)"></i>
<i style="width:95px;height:95px;margin:-47.5px;background:repeating-conic-gradient(from 90deg,#003a56 0,#00213d,#00031f,#00000a,#000002,#000000,#000002,#000003,#000004,#000007,#000007,#000006,#000004,#000003,#000001,#000000,#000002,#00000e,#000a26,#002844,#003f5b,#004d69,#05536f,#0b5975,#115f7b,#166480,#1a6884,#1c6a86,#1d6b87,#1c6a86,#196783,#15637f,#105e7a,#0a5874,#04526e,#004c68,#003a56 180deg)"></i>
<i style="width:93px;height:93px;margin:-46.5px;background:repeating-conic-gradient(from 90deg,#003b57 0,#00213d,#00031f,#00000a,#000001,#000000,#000002,#000003,#000006,#000008,#000009,#000008,#000006,#000003,#000002,#000000,#000001,#000009,#00011d,#001f3b,#003955,#004b67,#04526e,#0a5874,#105e7a,#15637f,#196783,#1b6985,#1c6a86,#1b6985,#196783,#15637f,#105e7a,#0a5874,#04526e,#004c68,#003b57 180deg)"></i>
<i style="width:91px;height:91px;margin:-45.5px;background:repeating-conic-gradient(from 90deg,#003b57 0,#00223e,#00031f,#00000a,#000001,#000000,#000002,#000003,#000007,#00000a,#00000b,#00000b,#000009,#000005,#000003,#000001,#000000,#000004,#000013,#001632,#003450,#004662,#02506c,#085672,#0e5c78,#13617d,#176581,#1a6884,#1b6985,#1b6985,#196783,#15637f,#105e7a,#0a5874,#04526e,#004c68,#003b57 180deg)"></i>
<i style="width:89px;height:89px;margin:-44.5px;background:repeating-conic-gradient(from 90deg,#003c58 0,#00233f,#000420,#00000a,#000001,#000001,#000002,#000004,#000009,#00000b,#00000d,#00000d,#00000b,#000008,#000003,#000002,#000000,#000002,#00000e,#000c28,#002b47,#00415d,#004e6a,#065470,#0c5a76,#12607c,#166480,#196783,#1b6985,#1a6884,#196783,#15637f,#105e7a,#0a5874,#05536f,#004c68,#003c58 180deg)"></i>
<i style="width:87px;height:87px;margin:-43.5px;background:repeating-conic-gradient(from 90deg,#003d59 0,#002440,#000521,#00000a,#000001,#000001,#000002,#000005,#000009,#00000d,#00000e,#00000e,#00000d,#00000a,#000005,#000002,#000001,#000001,#000009,#00031f,#00223e,#003c58,#004c68,#05536f,#0a5874,#105e7a,#15637f,#186682,#1a6884,#1a6884,#186682,#15637f,#105e7a,#0b5975,#05536f,#004d69,#003d59 180deg)"></i>
<i style="width:85px;height:85px;margin:-42.5px;background:repeating-conic-gradient(from 90deg,#003d59 0,#002541,#000622,#00000b,#000001,#000001,#000002,#000005,#00000a,#00000d,#00000f,#000010,#00000e,#00000b,#000007,#000003,#000001,#000000,#000004,#000016,#001935,#003652,#004864,#03516d,#085672,#0e5c78,#13617d,#166480,#186682,#196783,#176581,#14627e,#105e7a,#0a5874,#05536f,#004d69,#003d59 180deg)"></i>
<i style="width:83px;height:83px;margin:-41.5px;background:repeating-conic-gradient(from 90deg,#003e5a 0,#002642,#000723,#00000b,#000001,#000001,#000002,#000005,#00000a,#00000e,#000010,#000011,#000010,#00000d,#000009,#000004,#000002,#000000,#000003,#000010,#00102c,#002f4b,#00435f,#014f6b,#075571,#0c5a76,#115f7b,#15637f,#176581,#176581,#166480,#14627e,#105e7a,#0a5874,#05536f,#004d69,#003e5a 180deg)"></i>
<i style="width:81px;height:81px;margin:-40.5px;background:repeating-conic-gradient(from 90deg,#003e5a 0,#002743,#000824,#00000c,#000002,#000000,#000002,#000006,#00000b,#00000f,#000011,#000012,#000011,#00000f,#00000b,#000006,#000002,#000001,#000001,#00000b,#000723,#002642,#003e5a,#004d69,#05536f,#0a5874,#0f5d79,#13617d,#15637f,#166480,#166480,#13617d,#0f5d79,#0a5874,#05536f,#004d69,#003e5a 180deg)"></i>
<i style="width:79px;height:79px;margin:-39.5px;background:repeating-conic-gradient(from 90deg,#003f5b 0,#002945,#000a26,#00000c,#000002,#000000,#000002,#000006,#00000b,#00000f,#000012,#000013,#000013,#000010,#00000d,#000008,#000003,#000001,#000000,#000006,#00001a,#001d39,#003955,#004a66,#03516d,#085672,#0d5b77,#115f7b,#14627e,#15637f,#15637f,#13617d,#0f5d79,#0a5874,#05536f,#004d69,#003f5b 180deg)"></i>
<i style="width:77px;height:77px;margin:-38.5px;background:repeating-conic-gradient(from 90deg,#00405c 0,#002a46,#000b27,#00000d,#000002,#000000,#000002,#000006,#00000b,#000010,#000013,#000015,#000014,#000012,#00000f,#00000a,#000004,#000002,#000000,#000003,#000012,#001531,#00334f,#004561,#014f6b,#075571,#0b5975,#105e7a,#13617d,#14627e,#14627e,#12607c,#0e5c78,#0a5874,#05536f,#004d69,#00405c 180deg)"></i>
<i style="width:75px;height:75px;margin:-37.5px;background:repeating-conic-gradient(from 90deg,#00405c 0,#002b47,#000d29,#00000e,#000002,#000000,#000002,#000006,#00000c,#000010,#000013,#000016,#000016,#000013,#000010,#00000c,#000006,#000002,#000000,#000002,#00000e,#000c28,#002b47,#00405c,#004d69,#05536f,#0a5874,#0e5c78,#115f7b,#13617d,#13617d,#115f7b,#0e5c78,#0a5874,#05536f,#004e6a,#00405c 180deg)"></i>
<i style="width:73px;height:73px;margin:-36.5px;background:repeating-conic-gradient(from 90deg,#00415d 0,#002d49,#000e2a,#00000f,#000002,#000000,#000002,#000006,#00000c,#000011,#000014,#000018,#000018,#000016,#000012,#00000e,#000008,#000003,#000001,#000001,#000009,#00031f,#00223e,#003b57,#004c68,#03516d,#085672,#0c5a76,#105e7a,#12607c,#12607c,#115f7b,#0e5c78,#0a5874,#05536f,#004e6a,#00415d 180deg)"></i>
<i style="width:71px;height:71px;margin:-35.5px;background:repeating-conic-gradient(from 90deg,#00425e 0,#002e4a,#00102c,#000010,#000002,#000000,#000002,#000005,#00000c,#000011,#000015,#000019,#00001a,#000018,#000013,#00000f,#00000a,#000003,#000001,#000000,#000005,#000017,#001a36,#003652,#004763,#02506c,#075571,#0b5975,#0e5c78,#105e7a,#115f7b,#105e7a,#0d5b77,#0a5874,#05536f,#004e6a,#00425e 180deg)"></i>
<i style="width:69px;height:69px;margin:-34.5px;background:repeating-conic-gradient(from 90deg,#00425e 0,#00304c,#00122e,#000011,#000003,#000000,#000002,#000005,#00000c,#000011,#000016,#00001b,#00001c,#00001b,#000016,#000011,#00000c,#000005,#000002,#000000,#000003,#000011,#00122e,#00304c,#00435f,#004e6a,#05536f,#095773,#0d5b77,#0f5d79,#105e7a,#0f5d79,#0d5b77,#095773,#05536f,#004e6a,#00425e 180deg)"></i>
<i style="width:67px;height:67px;margin:-33.5px;background:repeating-conic-gradient(from 90deg,#00435f 0,#00324e,#001430,#000012,#000003,#000000,#000002,#000005,#00000c,#000011,#000017,#00001c,#00021e,#00011d,#000019,#000013,#00000e,#000007,#000003,#000001,#000002,#00000c,#000a26,#002844,#003e5a,#004c68,#04526e,#085672,#0b5975,#0e5c78,#0f5d79,#0e5c78,#0c5a76,#095773,#05536f,#004e6a,#00435f 180deg)"></i>
<i style="width:65px;height:65px;margin:-32.5px;background:repeating-conic-gradient(from 90deg,#004460 0,#00334f,#001531,#000013,#000003,#000000,#000002,#000005,#00000c,#000011,#000018,#00011d,#000420,#00031f,#00001c,#000015,#000010,#000009,#000003,#000001,#000000,#000008,#00011d,#00203c,#003955,#004965,#02506c,#075571,#0a5874,#0d5b77,#0e5c78,#0e5c78,#0c5a76,#095773,#05536f,#004e6a,#004460 180deg)"></i>
<i style="width:63px;height:63px;margin:-31.5px;background:repeating-conic-gradient(from 90deg,#004561 0,#003450,#001733,#000015,#000003,#000000,#000002,#000004,#00000b,#000011,#000018,#00021e,#000521,#000521,#00021e,#000018,#000011,#00000b,#000004,#000002,#000000,#000004,#000015,#001834,#003551,#004561,#014f6b,#05536f,#095773,#0b5975,#0d5b77,#0d5b77,#0b5975,#095773,#05536f,#004e6a,#004561 180deg)"></i>
<i style="width:61px;height:61px;margin:-30.5px;background:repeating-conic-gradient(from 90deg,#004561 0,#003551,#001a36,#000017,#000005,#000000,#000002,#000004,#00000b,#000011,#000019,#00031f,#000622,#000723,#000420,#00001b,#000013,#00000d,#000006,#000002,#000000,#000002,#000010,#00102c,#002e4a,#00415d,#004d69,#04526e,#085672,#0a5874,#0c5a76,#0c5a76,#0b5975,#095773,#05536f,#014f6b,#004561 180deg)"></i>
<i style="width:59px;height:59px;margin:-29.5px;background:repeating-conic-gradient(from 90deg,#004662 0,#003652,#001c38,#000019,#000006,#000000,#000001,#000004,#00000b,#000011,#000019,#000420,#000723,#000824,#000622,#00011d,#000016,#00000f,#000008,#000003,#000001,#000001,#00000c,#000824,#002642,#003c58,#004c68,#03516d,#075571,#095773,#0b5975,#0b5975,#0b5975,#085672,#05536f,#014f6b,#004662 180deg)"></i>
<i style="width:57px;height:57px;margin:-28.5px;background:repeating-conic-gradient(from 90deg,#004763 0,#003854,#001e3a,#00001b,#000007,#000000,#000001,#000003,#00000b,#000011,#000019,#000420,#000925,#000a26,#000824,#000420,#000019,#000011,#00000a,#000003,#000001,#000000,#000008,#00011d,#001f3b,#003854,#004864,#014f6b,#05536f,#085672,#0a5874,#0b5975,#0a5874,#085672,#05536f,#014f6b,#004763 180deg)"></i>
<i style="width:55px;height:55px;margin:-27.5px;background:repeating-conic-gradient(from 90deg,#004864 0,#003955,#00203c,#00021e,#000008,#000001,#000001,#000003,#00000a,#000011,#000019,#000521,#000925,#000b27,#000a26,#000622,#00001b,#000013,#00000c,#000005,#000002,#000000,#000004,#000015,#001834,#003450,#004460,#004e6a,#04526e,#075571,#095773,#0a5874,#0a5874,#085672,#05536f,#014f6b,#004864 180deg)"></i>
<i style="width:53px;height:53px;margin:-26.5px;background:repeating-conic-gradient(from 90deg,#004965 0,#003a56,#00223e,#000420,#00000a,#000001,#000001,#000003,#00000a,#000011,#000019,#000521,#000a26,#000d29,#000c28,#000925,#00021e,#000015,#00000e,#000007,#000002,#000000,#000003,#000010,#00102c,#002d49,#00405c,#004c68,#03516d,#065470,#095773,#0a5874,#095773,#085672,#05536f,#014f6b,#004965 180deg)"></i>
<i style="width:51px;height:51px;margin:-25.5px;background:repeating-conic-gradient(from 90deg,#004965 0,#003b57,#002440,#000723,#00000b,#000001,#000001,#000003,#000009,#000010,#000019,#000521,#000b27,#000e2a,#000e2a,#000b27,#000521,#000018,#000010,#000009,#000003,#000001,#000002,#00000c,#000925,#002642,#003c58,#004a66,#02506c,#05536f,#085672,#095773,#095773,#085672,#05536f,#014f6b,#004965 180deg)"></i>
<i style="width:49px;height:49px;margin:-24.5px;background:repeating-conic-gradient(from 90deg,#004a66 0,#003c58,#002743,#000925,#00000d,#000002,#000001,#000003,#000009,#000010,#000018,#000521,#000b27,#000f2b,#000f2b,#000d29,#000723,#00001b,#000012,#00000b,#000003,#000001,#000001,#000008,#00011d,#001f3b,#003854,#004763,#004e6a,#04526e,#075571,#085672,#085672,#075571,#05536f,#02506c,#004a66 180deg)"></i>
<i style="width:47px;height:47px;margin:-23.5px;background:repeating-conic-gradient(from 90deg,#004b67 0,#003d59,#002945,#000c28,#00000e,#000002,#000000,#000003,#000008,#00000f,#000018,#000521,#000c28,#00102c,#00112d,#000e2a,#000925,#00021e,#000013,#00000d,#000005,#000002,#000000,#000004,#000016,#001834,#003450,#00435f,#004d69,#03516d,#065470,#085672,#085672,#075571,#05536f,#02506c,#004b67 180deg)"></i>
<i style="width:45px;height:45px;margin:-22.5px;background:repeating-conic-gradient(from 90deg,#004c68 0,#003e5a,#002b47,#000f2b,#000010,#000002,#000000,#000002,#000007,#00000f,#000017,#000521,#000c28,#00102c,#00122e,#00102c,#000c28,#000420,#000016,#00000e,#000007,#000002,#000000,#000003,#000011,#00112d,#002e4a,#003f5b,#004c68,#02506c,#05536f,#075571,#085672,#075571,#05536f,#02506c,#004c68 180deg)"></i>
<i style="width:43px;height:43px;margin:-21.5px;background:repeating-conic-gradient(from 90deg,#004c68 0,#003f5b,#002e4a,#00122e,#000012,#000003,#000000,#000002,#000007,#00000e,#000016,#000420,#000c28,#00112d,#00132f,#00122e,#000e2a,#000723,#000019,#000010,#000009,#000003,#000001,#000002,#00000d,#000a26,#002743,#003b57,#004965,#014f6b,#04526e,#065470,#075571,#075571,#05536f,#02506c,#004c68 180deg)"></i>
<i style="width:41px;height:41px;margin:-20.5px;background:repeating-conic-gradient(from 90deg,#004c68 0,#00415d,#00314d,#001531,#000014,#000003,#000000,#000002,#000006,#00000e,#000015,#000420,#000c28,#00112d,#001430,#00132f,#00102c,#000925,#00001c,#000012,#00000b,#000003,#000001,#000001,#000009,#00021e,#00203c,#003854,#004662,#004e6a,#03516d,#05536f,#075571,#065470,#05536f,#02506c,#004c68 180deg)"></i>
<i style="width:39px;height:39px;margin:-19.5px;background:repeating-conic-gradient(from 90deg,#004d69 0,#00425e,#003450,#001935,#000017,#000005,#000000,#000002,#000005,#00000d,#000014,#00031f,#000c28,#00122e,#001531,#001531,#00122e,#000c28,#00031f,#000014,#00000d,#000005,#000002,#000000,#000005,#000017,#001935,#003450,#00425e,#004d69,#02506c,#05536f,#065470,#065470,#05536f,#02506c,#004d69 180deg)"></i>
<i style="width:37px;height:37px;margin:-18.5px;background:repeating-conic-gradient(from 90deg,#004d69 0,#004460,#003652,#001c38,#00001b,#000007,#000000,#000001,#000004,#00000c,#000013,#00021e,#000b27,#00122e,#001531,#001632,#00132f,#000e2a,#000622,#000017,#00000f,#000007,#000002,#000000,#000003,#000011,#00122e,#002d49,#003f5b,#004b67,#014f6b,#04526e,#05536f,#065470,#05536f,#02506c,#004d69 180deg)"></i>
<i style="width:35px;height:35px;margin:-17.5px;background:repeating-conic-gradient(from 90deg,#004d69 0,#004561,#003753,#00203c,#00031f,#000009,#000001,#000001,#000003,#00000b,#000012,#00011d,#000b27,#00122e,#001632,#001733,#001531,#00102c,#000925,#00001a,#000011,#000009,#000003,#000000,#000002,#00000e,#000b27,#002743,#003b57,#004864,#004e6a,#03516d,#05536f,#05536f,#05536f,#03516d,#004d69 180deg)"></i>
<i style="width:33px;height:33px;margin:-16.5px;background:repeating-conic-gradient(from 90deg,#004e6a 0,#004662,#003955,#00233f,#000723,#00000c,#000001,#000001,#000003,#00000a,#000011,#00001c,#000a26,#00112d,#001632,#001834,#001632,#00122e,#000b27,#00011d,#000012,#00000b,#000003,#000001,#000001,#00000a,#000420,#00203c,#003753,#004561,#004d69,#02506c,#04526e,#05536f,#04526e,#03516d,#004e6a 180deg)"></i>
<i style="width:31px;height:31px;margin:-15.5px;background:repeating-conic-gradient(from 90deg,#004e6a 0,#004864,#003b57,#002743,#000b27,#00000e,#000002,#000000,#000003,#000009,#000011,#00001b,#000925,#00112d,#001632,#001935,#001834,#001430,#000d29,#000420,#000014,#00000d,#000004,#000002,#000000,#000006,#000019,#001a36,#003450,#00425e,#004c68,#014f6b,#04526e,#05536f,#04526e,#03516d,#004e6a 180deg)"></i>
<i style="width:29px;height:29px;margin:-14.5px;background:repeating-conic-gradient(from 90deg,#004e6a 0,#004965,#003c58,#002a46,#000f2b,#000010,#000003,#000000,#000002,#000008,#000010,#000019,#000824,#00112d,#001632,#001935,#001935,#001632,#00102c,#000723,#000017,#00000e,#000006,#000002,#000000,#000003,#000013,#00132f,#002e4a,#003e5a,#004a66,#014f6b,#03516d,#04526e,#04526e,#03516d,#004e6a 180deg)"></i>
<i style="width:27px;height:27px;margin:-13.5px;background:repeating-conic-gradient(from 90deg,#004e6a 0,#004a66,#003e5a,#002e4a,#00132f,#000012,#000003,#000000,#000002,#000007,#00000f,#000018,#000723,#00102c,#001632,#001a36,#001a36,#001733,#00122e,#000925,#00001a,#000010,#000008,#000003,#000000,#000002,#00000f,#000c28,#002844,#003b57,#004864,#004e6a,#02506c,#04526e,#04526e,#03516d,#004e6a 180deg)"></i>
<i style="width:25px;height:25px;margin:-12.5px;background:repeating-conic-gradient(from 90deg,#014f6b 0,#004b67,#00405c,#00314d,#001733,#000016,#000004,#000000,#000002,#000005,#00000e,#000016,#000622,#000f2b,#001632,#001a36,#001b37,#001935,#00132f,#000c28,#00011d,#000012,#00000a,#000003,#000001,#000001,#00000b,#000622,#00223e,#003854,#004561,#004d69,#02506c,#03516d,#04526e,#03516d,#014f6b 180deg)"></i>
<i style="width:23px;height:23px;margin:-11.5px;background:repeating-conic-gradient(from 90deg,#014f6b 0,#004c68,#00415d,#003450,#001b37,#00001a,#000007,#000000,#000001,#000004,#00000c,#000014,#000420,#000e2a,#001531,#001a36,#001b37,#001a36,#001531,#000e2a,#000420,#000014,#00000c,#000004,#000001,#000000,#000008,#00001b,#001c38,#003551,#00425e,#004c68,#014f6b,#03516d,#04526e,#03516d,#014f6b 180deg)"></i>
<i style="width:21px;height:21px;margin:-10.5px;background:repeating-conic-gradient(from 90deg,#014f6b 0,#004c68,#00435f,#003652,#001f3b,#00031f,#000009,#000001,#000001,#000003,#00000b,#000013,#00031f,#000d29,#001531,#001a36,#001c38,#001b37,#001733,#00102c,#000622,#000017,#00000e,#000006,#000002,#000000,#000004,#000015,#001632,#00304c,#003f5b,#004a66,#004e6a,#02506c,#03516d,#03516d,#014f6b 180deg)"></i>
<i style="width:19px;height:19px;margin:-9.5px;background:repeating-conic-gradient(from 90deg,#014f6b 0,#004d69,#004561,#003854,#00233f,#000723,#00000c,#000001,#000001,#000003,#00000a,#000012,#00011d,#000c28,#001430,#001a36,#001c38,#001c38,#001834,#00122e,#000925,#000019,#00000f,#000007,#000002,#000000,#000003,#000011,#00102c,#002b47,#003c58,#004864,#004e6a,#02506c,#03516d,#03516d,#014f6b 180deg)"></i>
<i style="width:17px;height:17px;margin:-8.5px;background:repeating-conic-gradient(from 90deg,#014f6b 0,#004d69,#004662,#003a56,#002743,#000b27,#00000e,#000002,#000000,#000003,#000009,#000011,#00001b,#000b27,#00132f,#001935,#001c38,#001c38,#001a36,#001430,#000b27,#00001c,#000011,#000009,#000003,#000000,#000002,#00000e,#000a26,#002541,#003955,#004561,#004d69,#014f6b,#03516d,#03516d,#014f6b 180deg)"></i>
<i style="width:15px;height:15px;margin:-7.5px;background:repeating-conic-gradient(from 90deg,#02506c 0,#004d69,#004864,#003c58,#002a46,#00102c,#000011,#000003,#000000,#000002,#000007,#00000f,#00001a,#000925,#00122e,#001935,#001c38,#001d39,#001b37,#001531,#000d29,#00031f,#000013,#00000b,#000003,#000001,#000001,#00000a,#000420,#00203c,#003652,#00435f,#004c68,#014f6b,#02506c,#03516d,#02506c 180deg)"></i>
<i style="width:13px;height:13px;margin:-6.5px;background:repeating-conic-gradient(from 90deg,#02506c 0,#004e6a,#004965,#003e5a,#002e4a,#001430,#000014,#000003,#000000,#000002,#000006,#00000e,#000018,#000824,#00112d,#001834,#001c38,#001e3a,#001c38,#001733,#000f2b,#000521,#000015,#00000d,#000004,#000001,#000000,#000007,#00001a,#001a36,#00334f,#00415d,#004b67,#004e6a,#02506c,#03516d,#02506c 180deg)"></i>
<i style="width:11px;height:11px;margin:-5.5px;background:repeating-conic-gradient(from 90deg,#02506c 0,#004e6a,#004a66,#00405c,#00324e,#001935,#000019,#000006,#000000,#000002,#000005,#00000d,#000015,#000622,#00102c,#001733,#001c38,#001e3a,#001d39,#001834,#00112d,#000824,#000018,#00000e,#000006,#000002,#000000,#000003,#000014,#001430,#002e4a,#003e5a,#004965,#004e6a,#02506c,#02506c,#02506c 180deg)"></i>
<i style="width:9px;height:9px;margin:-4.5px;background:repeating-conic-gradient(from 90deg,#02506c 0,#004e6a,#004c68,#00425e,#003551,#001d39,#00021e,#000009,#000001,#000001,#000003,#00000c,#000013,#000420,#000e2a,#001632,#001c38,#001e3a,#001d39,#001a36,#00132f,#000a26,#00001a,#000010,#000008,#000002,#000000,#000003,#000011,#000f2b,#002945,#003b57,#004763,#004d69,#014f6b,#02506c,#02506c 180deg)"></i>
<i style="width:7px;height:7px;margin:-3.5px;background:repeating-conic-gradient(from 90deg,#02506c 0,#014f6b,#004c68,#004460,#003753,#00223e,#000723,#00000c,#000001,#000001,#000003,#00000a,#000012,#00021e,#000d29,#001531,#001b37,#001e3a,#001e3a,#001b37,#001531,#000c28,#00011d,#000011,#000009,#000003,#000001,#000002,#00000d,#000925,#002440,#003955,#004561,#004c68,#014f6b,#02506c,#02506c 180deg)"></i>
<i style="width:5px;height:5px;margin:-2.5px;background:repeating-conic-gradient(from 90deg,#02506c 0,#014f6b,#004d69,#004561,#003a56,#002642,#000c28,#00000f,#000002,#000000,#000003,#000009,#000011,#00001c,#000b27,#001430,#001a36,#001e3a,#001e3a,#001c38,#001632,#000e2a,#00031f,#000013,#00000b,#000003,#000001,#000001,#00000a,#000420,#00203c,#003652,#00435f,#004c68,#014f6b,#02506c,#02506c 180deg)"></i>
<i style="width:3px;height:3px;margin:-1.5px;background:repeating-conic-gradient(from 90deg,#02506c 0,#014f6b,#004d69,#004763,#003c58,#002b47,#00102c,#000011,#000003,#000000,#000002,#000007,#00000f,#00001a,#000925,#00132f,#001a36,#001d39,#001e3a,#001c38,#001733,#00102c,#000521,#000015,#00000c,#000004,#000001,#000000,#000007,#00001b,#001b37,#003450,#00405c,#004b67,#004e6a,#02506c,#02506c 180deg)"></i>
<i style="width:1px;height:1px;margin:-0.5px;background:repeating-conic-gradient(from 90deg,#02506c 0,#014f6b,#004d69,#004965,#003e5a,#002e4a,#001430,#000013,#000003,#000000,#000002,#000006,#00000e,#000018,#000824,#00122e,#001935,#001d39,#001e3a,#001d39,#001834,#00112d,#000723,#000016,#00000d,#000005,#000002,#000000,#000005,#000017,#001733,#00314d,#003f5b,#004a66,#004e6a,#02506c,#02506c 180deg)"></i><svg class="abs" style="left:0;top:0;filter:blur(2.2px)" width="290" height="231" viewBox="-145 -115.5 290 231"><g fill="none" stroke="#000416" stroke-linecap="butt" stroke-linejoin="round"><g><path d="M27.8 2.9 L28.2 2.5 L28.7 2.0 L29.2 1.5 L29.9 0.9 L30.5 0.3 L31.2 -0.5 L32.0 -1.3 L32.8 -2.1" stroke-opacity="1.00" stroke-width="13.5"/><path d="M32.8 -2.1 L33.6 -3.1 L34.4 -4.1 L35.2 -5.2 L36.0 -6.4 L36.9 -7.6 L37.9 -9.1 L38.9 -10.6 L40.0 -12.2" stroke-opacity="1.00" stroke-width="13.1"/><path d="M40.0 -12.2 L41.0 -14.0 L42.1 -15.7 L43.2 -17.5 L44.2 -19.3 L45.1 -21.1 L46.0 -22.9 L46.7 -24.6 L47.2 -26.2" stroke-opacity="1.00" stroke-width="12.8"/><path d="M47.2 -26.2 L47.7 -27.8 L48.0 -29.3 L48.3 -30.8 L48.5 -32.4 L48.6 -33.9 L48.6 -35.4 L48.6 -36.9 L48.5 -38.4" stroke-opacity="0.98" stroke-width="12.4"/><path d="M48.5 -38.4 L48.4 -39.9 L48.1 -41.4 L47.9 -42.8 L47.5 -44.3 L47.2 -45.8 L46.7 -47.3 L46.2 -48.8 L45.6 -50.4" stroke-opacity="0.89" stroke-width="12.0"/><path d="M45.6 -50.4 L45.0 -51.9 L44.3 -53.4 L43.5 -54.9 L42.7 -56.3 L41.8 -57.8 L40.8 -59.2 L39.8 -60.6 L38.7 -61.9" stroke-opacity="0.79" stroke-width="11.7"/><path d="M38.7 -61.9 L37.5 -63.2 L36.2 -64.5 L34.8 -65.8 L33.4 -67.0 L31.9 -68.2 L30.3 -69.4 L28.7 -70.6 L27.1 -71.7" stroke-opacity="0.70" stroke-width="11.3"/><path d="M27.1 -71.7 L25.4 -72.8 L23.7 -73.9 L22.0 -74.9 L20.3 -75.9 L18.6 -76.9 L16.9 -77.8 L15.1 -78.7 L13.2 -79.6" stroke-opacity="0.60" stroke-width="11.0"/><path d="M13.2 -79.6 L11.3 -80.4 L9.4 -81.2 L7.6 -82.0 L5.7 -82.7 L3.8 -83.4 L2.0 -84.0 L0.2 -84.5 L-1.5 -85.0" stroke-opacity="0.50" stroke-width="10.6"/><path d="M-1.5 -85.0 L-3.1 -85.4 L-4.7 -85.8 L-6.3 -86.0 L-7.8 -86.3 L-9.3 -86.5 L-10.8 -86.6 L-12.3 -86.7 L-13.8 -86.8" stroke-opacity="0.39" stroke-width="10.2"/><path d="M-13.8 -86.8 L-15.3 -86.8 L-16.8 -86.8 L-18.4 -86.8 L-20.0 -86.7 L-21.7 -86.6 L-23.6 -86.4 L-25.5 -86.2 L-27.5 -85.9" stroke-opacity="0.28" stroke-width="9.9"/><path d="M-27.5 -85.9 L-29.6 -85.6 L-31.6 -85.3 L-33.5 -84.9 L-35.3 -84.6 L-37.0 -84.3 L-38.5 -84.0 L-39.8 -83.8 L-40.8 -83.6" stroke-opacity="0.15" stroke-width="9.5"/></g><g transform="rotate(180)"><path d="M27.8 2.9 L28.2 2.5 L28.7 2.0 L29.2 1.5 L29.9 0.9 L30.5 0.3 L31.2 -0.5 L32.0 -1.3 L32.8 -2.1" stroke-opacity="1.00" stroke-width="13.5"/><path d="M32.8 -2.1 L33.6 -3.1 L34.4 -4.1 L35.2 -5.2 L36.0 -6.4 L36.9 -7.6 L37.9 -9.1 L38.9 -10.6 L40.0 -12.2" stroke-opacity="1.00" stroke-width="13.1"/><path d="M40.0 -12.2 L41.0 -14.0 L42.1 -15.7 L43.2 -17.5 L44.2 -19.3 L45.1 -21.1 L46.0 -22.9 L46.7 -24.6 L47.2 -26.2" stroke-opacity="1.00" stroke-width="12.8"/><path d="M47.2 -26.2 L47.7 -27.8 L48.0 -29.3 L48.3 -30.8 L48.5 -32.4 L48.6 -33.9 L48.6 -35.4 L48.6 -36.9 L48.5 -38.4" stroke-opacity="0.98" stroke-width="12.4"/><path d="M48.5 -38.4 L48.4 -39.9 L48.1 -41.4 L47.9 -42.8 L47.5 -44.3 L47.2 -45.8 L46.7 -47.3 L46.2 -48.8 L45.6 -50.4" stroke-opacity="0.89" stroke-width="12.0"/><path d="M45.6 -50.4 L45.0 -51.9 L44.3 -53.4 L43.5 -54.9 L42.7 -56.3 L41.8 -57.8 L40.8 -59.2 L39.8 -60.6 L38.7 -61.9" stroke-opacity="0.79" stroke-width="11.7"/><path d="M38.7 -61.9 L37.5 -63.2 L36.2 -64.5 L34.8 -65.8 L33.4 -67.0 L31.9 -68.2 L30.3 -69.4 L28.7 -70.6 L27.1 -71.7" stroke-opacity="0.70" stroke-width="11.3"/><path d="M27.1 -71.7 L25.4 -72.8 L23.7 -73.9 L22.0 -74.9 L20.3 -75.9 L18.6 -76.9 L16.9 -77.8 L15.1 -78.7 L13.2 -79.6" stroke-opacity="0.60" stroke-width="11.0"/><path d="M13.2 -79.6 L11.3 -80.4 L9.4 -81.2 L7.6 -82.0 L5.7 -82.7 L3.8 -83.4 L2.0 -84.0 L0.2 -84.5 L-1.5 -85.0" stroke-opacity="0.50" stroke-width="10.6"/><path d="M-1.5 -85.0 L-3.1 -85.4 L-4.7 -85.8 L-6.3 -86.0 L-7.8 -86.3 L-9.3 -86.5 L-10.8 -86.6 L-12.3 -86.7 L-13.8 -86.8" stroke-opacity="0.39" stroke-width="10.2"/><path d="M-13.8 -86.8 L-15.3 -86.8 L-16.8 -86.8 L-18.4 -86.8 L-20.0 -86.7 L-21.7 -86.6 L-23.6 -86.4 L-25.5 -86.2 L-27.5 -85.9" stroke-opacity="0.28" stroke-width="9.9"/><path d="M-27.5 -85.9 L-29.6 -85.6 L-31.6 -85.3 L-33.5 -84.9 L-35.3 -84.6 L-37.0 -84.3 L-38.5 -84.0 L-39.8 -83.8 L-40.8 -83.6" stroke-opacity="0.15" stroke-width="9.5"/></g></g></svg>
</div>
<div class="abs" style="left:416px;top:267px;width:299px;height:226px;background:#ece9d8"></div>
<div class="abs" style="left:416px;top:272px;width:299px;text-align:center;font-size:11px;line-height:14px;letter-spacing:-0.25px">Spiral Grads...</div>
<div class="abs" style="left:416px;top:291px;width:299px;height:11px;background:#fff;border:1px solid #6b6b66;border-radius:3px"></div>
<div class="abs row" style="top:322px"><div class="tri" style="left:187.0px"></div><span class="l">Amplitude</span><span class="v">168</span></div>
<div class="abs row" style="top:340px"><div class="tri" style="left:123.0px"></div><span class="l">Frequency</span><span class="v">112</span></div>
<div class="abs row" style="top:358px"><div class="tri" style="left:116.2px"></div><span class="l">Red</span><span class="v">106</span></div>
<div class="abs row" style="top:376px"><div class="tri" style="left:27.0px"></div><span class="l">Green</span><span class="v">28</span></div>
<div class="abs row" style="top:394px"><div class="tri" style="left:-5.0px"></div><span class="l">Blue</span><span class="v">0</span></div>
<div class="abs row" style="top:412px"></div>
<div class="abs row" style="top:430px"></div>
<div class="abs row" style="top:448px"><div class="tri" style="left:190.5px"></div><span class="l">Mode</span><span class="v">171</span></div>
<div class="abs bold" style="left:559px;top:475px;letter-spacing:-0.15px">Randomize</div>
<div class="abs bold" style="left:658px;top:475px">Reset</div>
<div class="abs" style="left:561px;top:375px;font-size:13px;line-height:16px;color:#9296b8;letter-spacing:0.9px;-webkit-text-stroke:0.3px #9296b8">Pinuccia</div>
<div class="abs" style="left:540px;top:391px;font-size:8.5px;line-height:10px;color:#8a8fb2;letter-spacing:0.1px">www.maidiregrafica.eu</div>

<!-- status -->
<div class="abs st" style="left:3px;top:510px">Database:</div>
<div class="abs st" style="left:59px;top:510px">ICNET-Filters</div>
<div class="abs st" style="left:3px;top:522px">Filters:</div>
<div class="abs st" style="left:59px;top:522px">1092</div>

<div class="abs btn" style="left:501px;box-shadow:inset 0 0 0 2px #a9c1f0">Apply</div>
<div class="abs btn" style="left:577px">Cancel</div>
<div class="abs btn" style="left:654px">Help</div>
</body></html>
